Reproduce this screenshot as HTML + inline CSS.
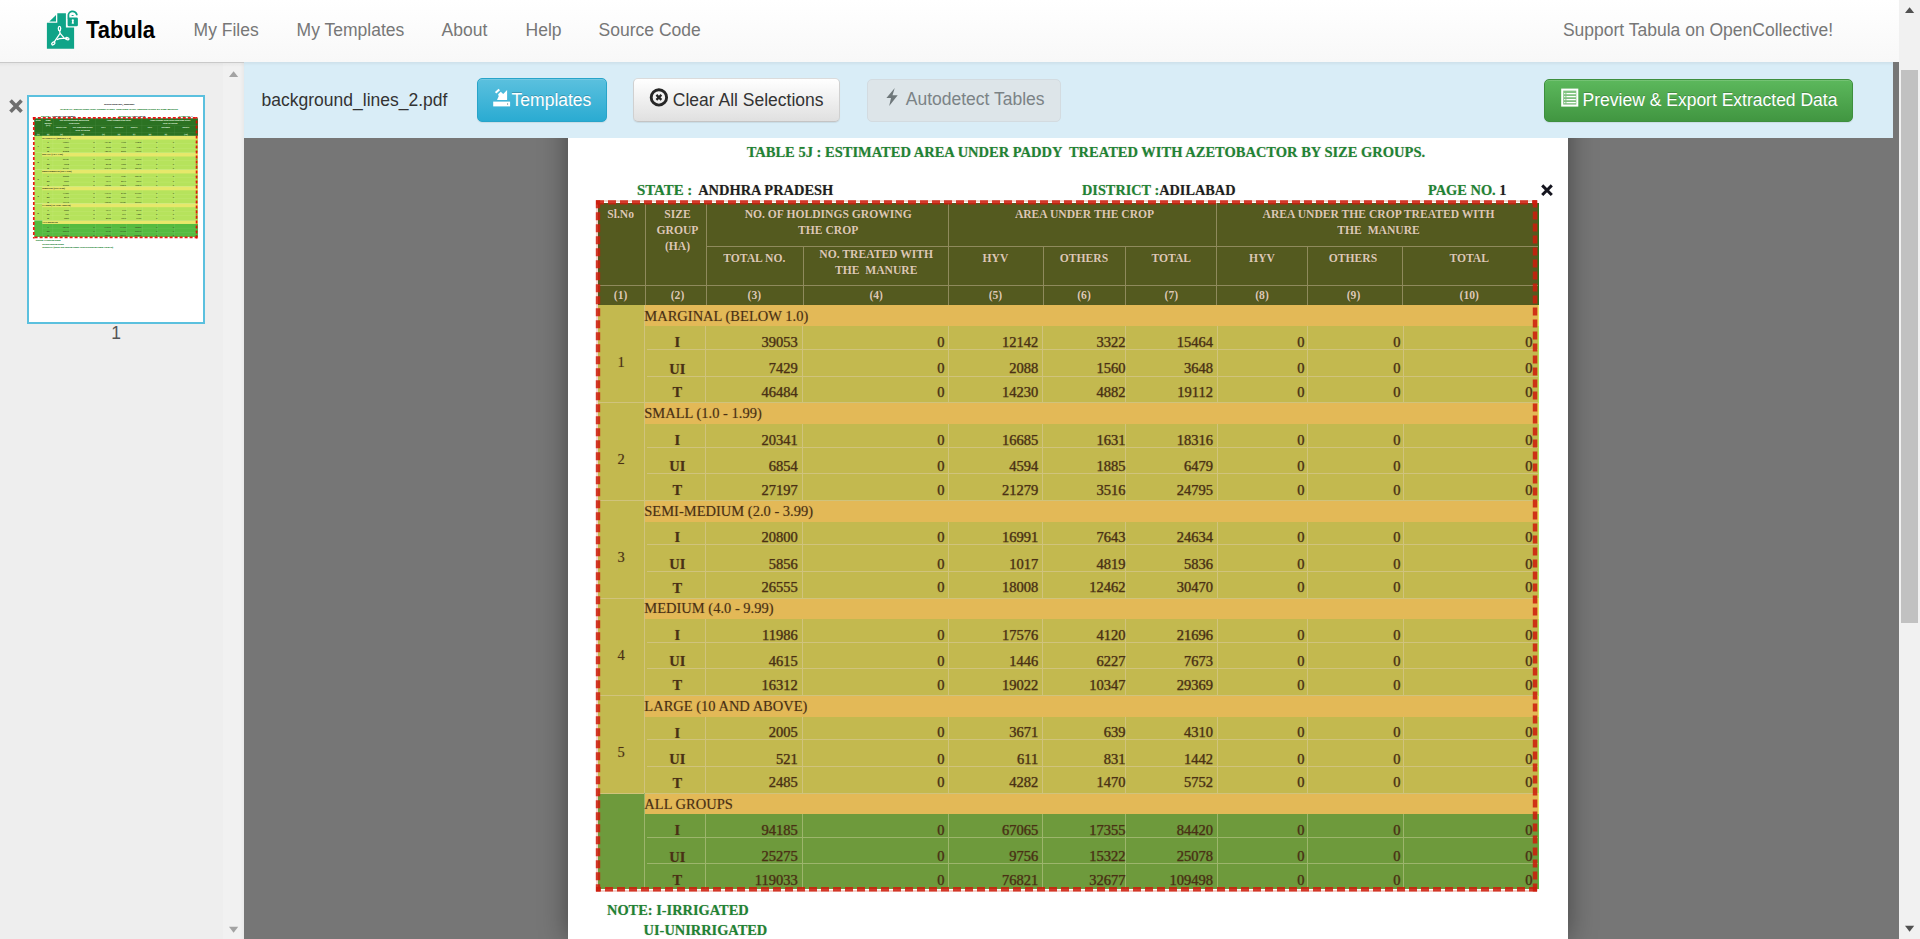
<!DOCTYPE html><html><head><meta charset="utf-8"><style>
*{box-sizing:border-box;margin:0;padding:0}
html,body{width:1920px;height:939px;overflow:hidden;background:#767676;font-family:"Liberation Sans",sans-serif}
.t{position:absolute;line-height:1;white-space:pre}
.r{position:absolute}
.abs{position:absolute}
#pgw .t{text-shadow:0 0 1px rgba(60,40,20,.35)}
#pgw .n{-webkit-text-stroke:.25px currentColor}
.th .t{-webkit-text-stroke:.6px currentColor}
</style></head><body>
<div class="r" style="left:244.00px;top:62.00px;width:1655.00px;height:877.00px;background:#767676;"></div>
<div class="r" style="left:568.00px;top:80.00px;width:1000.00px;height:859.00px;background:#fff;box-shadow:0 0 26px rgba(0,0,0,.42)"></div>
<div id="pgw" class="abs" style="left:0;top:0;width:1920px;height:939px">
<div class="t" style="left:746.70px;top:144.86px;font-size:14.5px;color:#1e8434;font-weight:700;font-family:'Liberation Serif',serif;">TABLE 5J : ESTIMATED AREA UNDER PADDY  TREATED WITH AZETOBACTOR BY SIZE GROUPS.</div>
<div class="t" style="left:637.00px;top:182.52px;font-size:14.9px;color:#1e8434;font-weight:700;font-family:'Liberation Serif',serif;">STATE :</div>
<div class="t" style="left:698.20px;top:182.90px;font-size:14.45px;color:#1e1e1e;font-weight:700;font-family:'Liberation Serif',serif;">ANDHRA PRADESH</div>
<div class="t" style="left:1082.00px;top:183.02px;font-size:14.3px;color:#1e8434;font-weight:700;font-family:'Liberation Serif',serif;">DISTRICT :<span style="color:#1e1e1e">ADILABAD</span></div>
<div class="t" style="left:1428.00px;top:182.94px;font-size:14.4px;color:#1e8434;font-weight:700;font-family:'Liberation Serif',serif;">PAGE NO. <span style="color:#1e1e1e">1</span></div>
<div class="r" style="left:598.00px;top:202.50px;width:939.50px;height:102.50px;background:#545a1f;"></div>
<div class="r" style="left:707px;top:245.80px;width:830.50px;height:1px;background:#8f8a5c"></div>
<div class="r" style="left:598px;top:284.60px;width:939.50px;height:1px;background:#8f8a5c"></div>
<div class="r" style="left:645.00px;top:202.50px;width:1px;height:102.50px;background:#8f8a5c"></div>
<div class="r" style="left:706.30px;top:202.50px;width:1px;height:102.50px;background:#8f8a5c"></div>
<div class="r" style="left:802.50px;top:246.30px;width:1px;height:58.70px;background:#8f8a5c"></div>
<div class="r" style="left:947.80px;top:202.50px;width:1px;height:102.50px;background:#8f8a5c"></div>
<div class="r" style="left:1042.50px;top:246.30px;width:1px;height:58.70px;background:#8f8a5c"></div>
<div class="r" style="left:1124.50px;top:246.30px;width:1px;height:58.70px;background:#8f8a5c"></div>
<div class="r" style="left:1216.20px;top:202.50px;width:1px;height:102.50px;background:#8f8a5c"></div>
<div class="r" style="left:1306.50px;top:246.30px;width:1px;height:58.70px;background:#8f8a5c"></div>
<div class="r" style="left:1401.50px;top:246.30px;width:1px;height:58.70px;background:#8f8a5c"></div>
<div class="t" style="left:320.60px;width:600px;text-align:center;top:208.98px;font-size:11.6px;color:#dcc8b4;font-weight:700;font-family:'Liberation Serif',serif;">Sl.No</div>
<div class="t" style="left:377.50px;width:600px;text-align:center;top:208.98px;font-size:11.6px;color:#dcc8b4;font-weight:700;font-family:'Liberation Serif',serif;">SIZE</div>
<div class="t" style="left:377.50px;width:600px;text-align:center;top:225.19px;font-size:11.6px;color:#dcc8b4;font-weight:700;font-family:'Liberation Serif',serif;">GROUP</div>
<div class="t" style="left:377.50px;width:600px;text-align:center;top:241.28px;font-size:11.6px;color:#dcc8b4;font-weight:700;font-family:'Liberation Serif',serif;">(HA)</div>
<div class="t" style="left:528.20px;width:600px;text-align:center;top:208.98px;font-size:11.6px;color:#dcc8b4;font-weight:700;font-family:'Liberation Serif',serif;">NO. OF HOLDINGS GROWING</div>
<div class="t" style="left:528.20px;width:600px;text-align:center;top:225.19px;font-size:11.6px;color:#dcc8b4;font-weight:700;font-family:'Liberation Serif',serif;">THE CROP</div>
<div class="t" style="left:784.50px;width:600px;text-align:center;top:208.98px;font-size:11.6px;color:#dcc8b4;font-weight:700;font-family:'Liberation Serif',serif;">AREA UNDER THE CROP</div>
<div class="t" style="left:1078.60px;width:600px;text-align:center;top:208.98px;font-size:11.6px;color:#dcc8b4;font-weight:700;font-family:'Liberation Serif',serif;">AREA UNDER THE CROP TREATED WITH</div>
<div class="t" style="left:1078.60px;width:600px;text-align:center;top:225.19px;font-size:11.6px;color:#dcc8b4;font-weight:700;font-family:'Liberation Serif',serif;">THE  MANURE</div>
<div class="t" style="left:454.30px;width:600px;text-align:center;top:252.68px;font-size:11.6px;color:#dcc8b4;font-weight:700;font-family:'Liberation Serif',serif;">TOTAL NO.</div>
<div class="t" style="left:576.20px;width:600px;text-align:center;top:248.89px;font-size:11.6px;color:#dcc8b4;font-weight:700;font-family:'Liberation Serif',serif;">NO. TREATED WITH</div>
<div class="t" style="left:576.20px;width:600px;text-align:center;top:264.99px;font-size:11.6px;color:#dcc8b4;font-weight:700;font-family:'Liberation Serif',serif;">THE  MANURE</div>
<div class="t" style="left:695.40px;width:600px;text-align:center;top:252.68px;font-size:11.6px;color:#dcc8b4;font-weight:700;font-family:'Liberation Serif',serif;">HYV</div>
<div class="t" style="left:784.00px;width:600px;text-align:center;top:252.68px;font-size:11.6px;color:#dcc8b4;font-weight:700;font-family:'Liberation Serif',serif;">OTHERS</div>
<div class="t" style="left:871.30px;width:600px;text-align:center;top:252.68px;font-size:11.6px;color:#dcc8b4;font-weight:700;font-family:'Liberation Serif',serif;">TOTAL</div>
<div class="t" style="left:962.00px;width:600px;text-align:center;top:252.68px;font-size:11.6px;color:#dcc8b4;font-weight:700;font-family:'Liberation Serif',serif;">HYV</div>
<div class="t" style="left:1053.00px;width:600px;text-align:center;top:252.68px;font-size:11.6px;color:#dcc8b4;font-weight:700;font-family:'Liberation Serif',serif;">OTHERS</div>
<div class="t" style="left:1169.20px;width:600px;text-align:center;top:252.68px;font-size:11.6px;color:#dcc8b4;font-weight:700;font-family:'Liberation Serif',serif;">TOTAL</div>
<div class="t" style="left:320.60px;width:600px;text-align:center;top:290.29px;font-size:11.6px;color:#dcc8b4;font-weight:700;font-family:'Liberation Serif',serif;">(1)</div>
<div class="t" style="left:377.50px;width:600px;text-align:center;top:290.29px;font-size:11.6px;color:#dcc8b4;font-weight:700;font-family:'Liberation Serif',serif;">(2)</div>
<div class="t" style="left:454.30px;width:600px;text-align:center;top:290.29px;font-size:11.6px;color:#dcc8b4;font-weight:700;font-family:'Liberation Serif',serif;">(3)</div>
<div class="t" style="left:576.20px;width:600px;text-align:center;top:290.29px;font-size:11.6px;color:#dcc8b4;font-weight:700;font-family:'Liberation Serif',serif;">(4)</div>
<div class="t" style="left:695.40px;width:600px;text-align:center;top:290.29px;font-size:11.6px;color:#dcc8b4;font-weight:700;font-family:'Liberation Serif',serif;">(5)</div>
<div class="t" style="left:784.00px;width:600px;text-align:center;top:290.29px;font-size:11.6px;color:#dcc8b4;font-weight:700;font-family:'Liberation Serif',serif;">(6)</div>
<div class="t" style="left:871.30px;width:600px;text-align:center;top:290.29px;font-size:11.6px;color:#dcc8b4;font-weight:700;font-family:'Liberation Serif',serif;">(7)</div>
<div class="t" style="left:962.00px;width:600px;text-align:center;top:290.29px;font-size:11.6px;color:#dcc8b4;font-weight:700;font-family:'Liberation Serif',serif;">(8)</div>
<div class="t" style="left:1053.50px;width:600px;text-align:center;top:290.29px;font-size:11.6px;color:#dcc8b4;font-weight:700;font-family:'Liberation Serif',serif;">(9)</div>
<div class="t" style="left:1169.20px;width:600px;text-align:center;top:290.29px;font-size:11.6px;color:#dcc8b4;font-weight:700;font-family:'Liberation Serif',serif;">(10)</div>
<div class="r" style="left:598.00px;top:305.40px;width:939.50px;height:97.56px;background:#c3b94f;"></div>
<div class="r" style="left:644.00px;top:305.40px;width:893.50px;height:21.00px;background:#e3b957;"></div>
<div class="r" style="left:598.00px;top:402.96px;width:939.50px;height:97.56px;background:#c3b94f;"></div>
<div class="r" style="left:644.00px;top:402.96px;width:893.50px;height:21.00px;background:#e3b957;"></div>
<div class="r" style="left:598.00px;top:500.52px;width:939.50px;height:97.56px;background:#c3b94f;"></div>
<div class="r" style="left:644.00px;top:500.52px;width:893.50px;height:21.00px;background:#e3b957;"></div>
<div class="r" style="left:598.00px;top:598.08px;width:939.50px;height:97.56px;background:#c3b94f;"></div>
<div class="r" style="left:644.00px;top:598.08px;width:893.50px;height:21.00px;background:#e3b957;"></div>
<div class="r" style="left:598.00px;top:695.64px;width:939.50px;height:97.56px;background:#c3b94f;"></div>
<div class="r" style="left:644.00px;top:695.64px;width:893.50px;height:21.00px;background:#e3b957;"></div>
<div class="r" style="left:598.00px;top:793.20px;width:939.50px;height:96.30px;background:#6e9a3c;"></div>
<div class="r" style="left:644.00px;top:793.20px;width:893.50px;height:21.00px;background:#e3b957;"></div>
<div class="r" style="left:1537.50px;top:202.50px;width:1.00px;height:102.50px;background:#2b7222;"></div>
<div class="r" style="left:1537.50px;top:305.40px;width:1.00px;height:97.56px;background:#b6e35c;"></div>
<div class="r" style="left:1537.50px;top:305.40px;width:1.00px;height:21.00px;background:#e6e86a;"></div>
<div class="r" style="left:1537.50px;top:402.96px;width:1.00px;height:97.56px;background:#b6e35c;"></div>
<div class="r" style="left:1537.50px;top:402.96px;width:1.00px;height:21.00px;background:#e6e86a;"></div>
<div class="r" style="left:1537.50px;top:500.52px;width:1.00px;height:97.56px;background:#b6e35c;"></div>
<div class="r" style="left:1537.50px;top:500.52px;width:1.00px;height:21.00px;background:#e6e86a;"></div>
<div class="r" style="left:1537.50px;top:598.08px;width:1.00px;height:97.56px;background:#b6e35c;"></div>
<div class="r" style="left:1537.50px;top:598.08px;width:1.00px;height:21.00px;background:#e6e86a;"></div>
<div class="r" style="left:1537.50px;top:695.64px;width:1.00px;height:97.56px;background:#b6e35c;"></div>
<div class="r" style="left:1537.50px;top:695.64px;width:1.00px;height:21.00px;background:#e6e86a;"></div>
<div class="r" style="left:1537.50px;top:793.20px;width:1.00px;height:96.30px;background:#55bb40;"></div>
<div class="r" style="left:1537.50px;top:793.20px;width:1.00px;height:21.00px;background:#e6e86a;"></div>
<div class="r" style="left:647px;top:349.10px;width:890.50px;height:1px;background:#d0c37c"></div>
<div class="r" style="left:647px;top:375.50px;width:890.50px;height:1px;background:#d0c37c"></div>
<div class="r" style="left:643.50px;top:305.40px;width:1px;height:97.56px;background:#d0c37c"></div>
<div class="r" style="left:704.50px;top:326.40px;width:1px;height:76.56px;background:#d0c37c"></div>
<div class="r" style="left:801.90px;top:326.40px;width:1px;height:76.56px;background:#d0c37c"></div>
<div class="r" style="left:948.00px;top:326.40px;width:1px;height:76.56px;background:#d0c37c"></div>
<div class="r" style="left:1042.20px;top:326.40px;width:1px;height:76.56px;background:#d0c37c"></div>
<div class="r" style="left:1124.50px;top:326.40px;width:1px;height:76.56px;background:#d0c37c"></div>
<div class="r" style="left:1217.00px;top:326.40px;width:1px;height:76.56px;background:#d0c37c"></div>
<div class="r" style="left:1307.30px;top:326.40px;width:1px;height:76.56px;background:#d0c37c"></div>
<div class="r" style="left:1403.10px;top:326.40px;width:1px;height:76.56px;background:#d0c37c"></div>
<div class="r" style="left:647px;top:446.66px;width:890.50px;height:1px;background:#d0c37c"></div>
<div class="r" style="left:647px;top:473.06px;width:890.50px;height:1px;background:#d0c37c"></div>
<div class="r" style="left:598px;top:402.46px;width:939.50px;height:1px;background:#d0c37c"></div>
<div class="r" style="left:643.50px;top:402.96px;width:1px;height:97.56px;background:#d0c37c"></div>
<div class="r" style="left:704.50px;top:423.96px;width:1px;height:76.56px;background:#d0c37c"></div>
<div class="r" style="left:801.90px;top:423.96px;width:1px;height:76.56px;background:#d0c37c"></div>
<div class="r" style="left:948.00px;top:423.96px;width:1px;height:76.56px;background:#d0c37c"></div>
<div class="r" style="left:1042.20px;top:423.96px;width:1px;height:76.56px;background:#d0c37c"></div>
<div class="r" style="left:1124.50px;top:423.96px;width:1px;height:76.56px;background:#d0c37c"></div>
<div class="r" style="left:1217.00px;top:423.96px;width:1px;height:76.56px;background:#d0c37c"></div>
<div class="r" style="left:1307.30px;top:423.96px;width:1px;height:76.56px;background:#d0c37c"></div>
<div class="r" style="left:1403.10px;top:423.96px;width:1px;height:76.56px;background:#d0c37c"></div>
<div class="r" style="left:647px;top:544.22px;width:890.50px;height:1px;background:#d0c37c"></div>
<div class="r" style="left:647px;top:570.62px;width:890.50px;height:1px;background:#d0c37c"></div>
<div class="r" style="left:598px;top:500.02px;width:939.50px;height:1px;background:#d0c37c"></div>
<div class="r" style="left:643.50px;top:500.52px;width:1px;height:97.56px;background:#d0c37c"></div>
<div class="r" style="left:704.50px;top:521.52px;width:1px;height:76.56px;background:#d0c37c"></div>
<div class="r" style="left:801.90px;top:521.52px;width:1px;height:76.56px;background:#d0c37c"></div>
<div class="r" style="left:948.00px;top:521.52px;width:1px;height:76.56px;background:#d0c37c"></div>
<div class="r" style="left:1042.20px;top:521.52px;width:1px;height:76.56px;background:#d0c37c"></div>
<div class="r" style="left:1124.50px;top:521.52px;width:1px;height:76.56px;background:#d0c37c"></div>
<div class="r" style="left:1217.00px;top:521.52px;width:1px;height:76.56px;background:#d0c37c"></div>
<div class="r" style="left:1307.30px;top:521.52px;width:1px;height:76.56px;background:#d0c37c"></div>
<div class="r" style="left:1403.10px;top:521.52px;width:1px;height:76.56px;background:#d0c37c"></div>
<div class="r" style="left:647px;top:641.78px;width:890.50px;height:1px;background:#d0c37c"></div>
<div class="r" style="left:647px;top:668.18px;width:890.50px;height:1px;background:#d0c37c"></div>
<div class="r" style="left:598px;top:597.58px;width:939.50px;height:1px;background:#d0c37c"></div>
<div class="r" style="left:643.50px;top:598.08px;width:1px;height:97.56px;background:#d0c37c"></div>
<div class="r" style="left:704.50px;top:619.08px;width:1px;height:76.56px;background:#d0c37c"></div>
<div class="r" style="left:801.90px;top:619.08px;width:1px;height:76.56px;background:#d0c37c"></div>
<div class="r" style="left:948.00px;top:619.08px;width:1px;height:76.56px;background:#d0c37c"></div>
<div class="r" style="left:1042.20px;top:619.08px;width:1px;height:76.56px;background:#d0c37c"></div>
<div class="r" style="left:1124.50px;top:619.08px;width:1px;height:76.56px;background:#d0c37c"></div>
<div class="r" style="left:1217.00px;top:619.08px;width:1px;height:76.56px;background:#d0c37c"></div>
<div class="r" style="left:1307.30px;top:619.08px;width:1px;height:76.56px;background:#d0c37c"></div>
<div class="r" style="left:1403.10px;top:619.08px;width:1px;height:76.56px;background:#d0c37c"></div>
<div class="r" style="left:647px;top:739.34px;width:890.50px;height:1px;background:#d0c37c"></div>
<div class="r" style="left:647px;top:765.74px;width:890.50px;height:1px;background:#d0c37c"></div>
<div class="r" style="left:598px;top:695.14px;width:939.50px;height:1px;background:#d0c37c"></div>
<div class="r" style="left:643.50px;top:695.64px;width:1px;height:97.56px;background:#d0c37c"></div>
<div class="r" style="left:704.50px;top:716.64px;width:1px;height:76.56px;background:#d0c37c"></div>
<div class="r" style="left:801.90px;top:716.64px;width:1px;height:76.56px;background:#d0c37c"></div>
<div class="r" style="left:948.00px;top:716.64px;width:1px;height:76.56px;background:#d0c37c"></div>
<div class="r" style="left:1042.20px;top:716.64px;width:1px;height:76.56px;background:#d0c37c"></div>
<div class="r" style="left:1124.50px;top:716.64px;width:1px;height:76.56px;background:#d0c37c"></div>
<div class="r" style="left:1217.00px;top:716.64px;width:1px;height:76.56px;background:#d0c37c"></div>
<div class="r" style="left:1307.30px;top:716.64px;width:1px;height:76.56px;background:#d0c37c"></div>
<div class="r" style="left:1403.10px;top:716.64px;width:1px;height:76.56px;background:#d0c37c"></div>
<div class="r" style="left:647px;top:836.90px;width:890.50px;height:1px;background:#9cb56c"></div>
<div class="r" style="left:647px;top:863.30px;width:890.50px;height:1px;background:#9cb56c"></div>
<div class="r" style="left:598px;top:792.70px;width:939.50px;height:1px;background:#d0c37c"></div>
<div class="r" style="left:643.50px;top:793.20px;width:1px;height:96.30px;background:#9cb56c"></div>
<div class="r" style="left:704.50px;top:814.20px;width:1px;height:75.30px;background:#9cb56c"></div>
<div class="r" style="left:801.90px;top:814.20px;width:1px;height:75.30px;background:#9cb56c"></div>
<div class="r" style="left:948.00px;top:814.20px;width:1px;height:75.30px;background:#9cb56c"></div>
<div class="r" style="left:1042.20px;top:814.20px;width:1px;height:75.30px;background:#9cb56c"></div>
<div class="r" style="left:1124.50px;top:814.20px;width:1px;height:75.30px;background:#9cb56c"></div>
<div class="r" style="left:1217.00px;top:814.20px;width:1px;height:75.30px;background:#9cb56c"></div>
<div class="r" style="left:1307.30px;top:814.20px;width:1px;height:75.30px;background:#9cb56c"></div>
<div class="r" style="left:1403.10px;top:814.20px;width:1px;height:75.30px;background:#9cb56c"></div>
<div class="t" style="left:644.30px;top:308.76px;font-size:14.5px;color:#4a3015;font-weight:400;font-family:'Liberation Serif',serif;">MARGINAL (BELOW 1.0)</div>
<div class="t" style="left:321.00px;width:600px;text-align:center;top:354.86px;font-size:14.5px;color:#4a3015;font-weight:400;font-family:'Liberation Serif',serif;">1</div>
<div class="t" style="left:377.30px;width:600px;text-align:center;top:335.26px;font-size:14.5px;color:#4a3015;font-weight:700;font-family:'Liberation Serif',serif;">I</div>
<div class="t" style="left:197.70px;width:600px;text-align:right;top:334.96px;font-size:14.5px;color:#4a3015;font-weight:400;font-family:'Liberation Serif',serif;-webkit-text-stroke:.25px">39053</div>
<div class="t" style="left:344.60px;width:600px;text-align:right;top:334.96px;font-size:14.5px;color:#4a3015;font-weight:400;font-family:'Liberation Serif',serif;-webkit-text-stroke:.25px">0</div>
<div class="t" style="left:438.20px;width:600px;text-align:right;top:334.96px;font-size:14.5px;color:#4a3015;font-weight:400;font-family:'Liberation Serif',serif;-webkit-text-stroke:.25px">12142</div>
<div class="t" style="left:525.50px;width:600px;text-align:right;top:334.96px;font-size:14.5px;color:#4a3015;font-weight:400;font-family:'Liberation Serif',serif;-webkit-text-stroke:.25px">3322</div>
<div class="t" style="left:613.00px;width:600px;text-align:right;top:334.96px;font-size:14.5px;color:#4a3015;font-weight:400;font-family:'Liberation Serif',serif;-webkit-text-stroke:.25px">15464</div>
<div class="t" style="left:704.60px;width:600px;text-align:right;top:334.96px;font-size:14.5px;color:#4a3015;font-weight:400;font-family:'Liberation Serif',serif;-webkit-text-stroke:.25px">0</div>
<div class="t" style="left:800.40px;width:600px;text-align:right;top:334.96px;font-size:14.5px;color:#4a3015;font-weight:400;font-family:'Liberation Serif',serif;-webkit-text-stroke:.25px">0</div>
<div class="t" style="left:932.50px;width:600px;text-align:right;top:334.96px;font-size:14.5px;color:#4a3015;font-weight:400;font-family:'Liberation Serif',serif;-webkit-text-stroke:.25px">0</div>
<div class="t" style="left:377.30px;width:600px;text-align:center;top:361.76px;font-size:14.5px;color:#4a3015;font-weight:700;font-family:'Liberation Serif',serif;">UI</div>
<div class="t" style="left:197.70px;width:600px;text-align:right;top:361.46px;font-size:14.5px;color:#4a3015;font-weight:400;font-family:'Liberation Serif',serif;-webkit-text-stroke:.25px">7429</div>
<div class="t" style="left:344.60px;width:600px;text-align:right;top:361.46px;font-size:14.5px;color:#4a3015;font-weight:400;font-family:'Liberation Serif',serif;-webkit-text-stroke:.25px">0</div>
<div class="t" style="left:438.20px;width:600px;text-align:right;top:361.46px;font-size:14.5px;color:#4a3015;font-weight:400;font-family:'Liberation Serif',serif;-webkit-text-stroke:.25px">2088</div>
<div class="t" style="left:525.50px;width:600px;text-align:right;top:361.46px;font-size:14.5px;color:#4a3015;font-weight:400;font-family:'Liberation Serif',serif;-webkit-text-stroke:.25px">1560</div>
<div class="t" style="left:613.00px;width:600px;text-align:right;top:361.46px;font-size:14.5px;color:#4a3015;font-weight:400;font-family:'Liberation Serif',serif;-webkit-text-stroke:.25px">3648</div>
<div class="t" style="left:704.60px;width:600px;text-align:right;top:361.46px;font-size:14.5px;color:#4a3015;font-weight:400;font-family:'Liberation Serif',serif;-webkit-text-stroke:.25px">0</div>
<div class="t" style="left:800.40px;width:600px;text-align:right;top:361.46px;font-size:14.5px;color:#4a3015;font-weight:400;font-family:'Liberation Serif',serif;-webkit-text-stroke:.25px">0</div>
<div class="t" style="left:932.50px;width:600px;text-align:right;top:361.46px;font-size:14.5px;color:#4a3015;font-weight:400;font-family:'Liberation Serif',serif;-webkit-text-stroke:.25px">0</div>
<div class="t" style="left:377.30px;width:600px;text-align:center;top:385.46px;font-size:14.5px;color:#4a3015;font-weight:700;font-family:'Liberation Serif',serif;">T</div>
<div class="t" style="left:197.70px;width:600px;text-align:right;top:385.16px;font-size:14.5px;color:#4a3015;font-weight:400;font-family:'Liberation Serif',serif;-webkit-text-stroke:.25px">46484</div>
<div class="t" style="left:344.60px;width:600px;text-align:right;top:385.16px;font-size:14.5px;color:#4a3015;font-weight:400;font-family:'Liberation Serif',serif;-webkit-text-stroke:.25px">0</div>
<div class="t" style="left:438.20px;width:600px;text-align:right;top:385.16px;font-size:14.5px;color:#4a3015;font-weight:400;font-family:'Liberation Serif',serif;-webkit-text-stroke:.25px">14230</div>
<div class="t" style="left:525.50px;width:600px;text-align:right;top:385.16px;font-size:14.5px;color:#4a3015;font-weight:400;font-family:'Liberation Serif',serif;-webkit-text-stroke:.25px">4882</div>
<div class="t" style="left:613.00px;width:600px;text-align:right;top:385.16px;font-size:14.5px;color:#4a3015;font-weight:400;font-family:'Liberation Serif',serif;-webkit-text-stroke:.25px">19112</div>
<div class="t" style="left:704.60px;width:600px;text-align:right;top:385.16px;font-size:14.5px;color:#4a3015;font-weight:400;font-family:'Liberation Serif',serif;-webkit-text-stroke:.25px">0</div>
<div class="t" style="left:800.40px;width:600px;text-align:right;top:385.16px;font-size:14.5px;color:#4a3015;font-weight:400;font-family:'Liberation Serif',serif;-webkit-text-stroke:.25px">0</div>
<div class="t" style="left:932.50px;width:600px;text-align:right;top:385.16px;font-size:14.5px;color:#4a3015;font-weight:400;font-family:'Liberation Serif',serif;-webkit-text-stroke:.25px">0</div>
<div class="t" style="left:644.30px;top:406.32px;font-size:14.5px;color:#4a3015;font-weight:400;font-family:'Liberation Serif',serif;">SMALL (1.0 - 1.99)</div>
<div class="t" style="left:321.00px;width:600px;text-align:center;top:452.42px;font-size:14.5px;color:#4a3015;font-weight:400;font-family:'Liberation Serif',serif;">2</div>
<div class="t" style="left:377.30px;width:600px;text-align:center;top:432.82px;font-size:14.5px;color:#4a3015;font-weight:700;font-family:'Liberation Serif',serif;">I</div>
<div class="t" style="left:197.70px;width:600px;text-align:right;top:432.52px;font-size:14.5px;color:#4a3015;font-weight:400;font-family:'Liberation Serif',serif;-webkit-text-stroke:.25px">20341</div>
<div class="t" style="left:344.60px;width:600px;text-align:right;top:432.52px;font-size:14.5px;color:#4a3015;font-weight:400;font-family:'Liberation Serif',serif;-webkit-text-stroke:.25px">0</div>
<div class="t" style="left:438.20px;width:600px;text-align:right;top:432.52px;font-size:14.5px;color:#4a3015;font-weight:400;font-family:'Liberation Serif',serif;-webkit-text-stroke:.25px">16685</div>
<div class="t" style="left:525.50px;width:600px;text-align:right;top:432.52px;font-size:14.5px;color:#4a3015;font-weight:400;font-family:'Liberation Serif',serif;-webkit-text-stroke:.25px">1631</div>
<div class="t" style="left:613.00px;width:600px;text-align:right;top:432.52px;font-size:14.5px;color:#4a3015;font-weight:400;font-family:'Liberation Serif',serif;-webkit-text-stroke:.25px">18316</div>
<div class="t" style="left:704.60px;width:600px;text-align:right;top:432.52px;font-size:14.5px;color:#4a3015;font-weight:400;font-family:'Liberation Serif',serif;-webkit-text-stroke:.25px">0</div>
<div class="t" style="left:800.40px;width:600px;text-align:right;top:432.52px;font-size:14.5px;color:#4a3015;font-weight:400;font-family:'Liberation Serif',serif;-webkit-text-stroke:.25px">0</div>
<div class="t" style="left:932.50px;width:600px;text-align:right;top:432.52px;font-size:14.5px;color:#4a3015;font-weight:400;font-family:'Liberation Serif',serif;-webkit-text-stroke:.25px">0</div>
<div class="t" style="left:377.30px;width:600px;text-align:center;top:459.32px;font-size:14.5px;color:#4a3015;font-weight:700;font-family:'Liberation Serif',serif;">UI</div>
<div class="t" style="left:197.70px;width:600px;text-align:right;top:459.02px;font-size:14.5px;color:#4a3015;font-weight:400;font-family:'Liberation Serif',serif;-webkit-text-stroke:.25px">6854</div>
<div class="t" style="left:344.60px;width:600px;text-align:right;top:459.02px;font-size:14.5px;color:#4a3015;font-weight:400;font-family:'Liberation Serif',serif;-webkit-text-stroke:.25px">0</div>
<div class="t" style="left:438.20px;width:600px;text-align:right;top:459.02px;font-size:14.5px;color:#4a3015;font-weight:400;font-family:'Liberation Serif',serif;-webkit-text-stroke:.25px">4594</div>
<div class="t" style="left:525.50px;width:600px;text-align:right;top:459.02px;font-size:14.5px;color:#4a3015;font-weight:400;font-family:'Liberation Serif',serif;-webkit-text-stroke:.25px">1885</div>
<div class="t" style="left:613.00px;width:600px;text-align:right;top:459.02px;font-size:14.5px;color:#4a3015;font-weight:400;font-family:'Liberation Serif',serif;-webkit-text-stroke:.25px">6479</div>
<div class="t" style="left:704.60px;width:600px;text-align:right;top:459.02px;font-size:14.5px;color:#4a3015;font-weight:400;font-family:'Liberation Serif',serif;-webkit-text-stroke:.25px">0</div>
<div class="t" style="left:800.40px;width:600px;text-align:right;top:459.02px;font-size:14.5px;color:#4a3015;font-weight:400;font-family:'Liberation Serif',serif;-webkit-text-stroke:.25px">0</div>
<div class="t" style="left:932.50px;width:600px;text-align:right;top:459.02px;font-size:14.5px;color:#4a3015;font-weight:400;font-family:'Liberation Serif',serif;-webkit-text-stroke:.25px">0</div>
<div class="t" style="left:377.30px;width:600px;text-align:center;top:483.02px;font-size:14.5px;color:#4a3015;font-weight:700;font-family:'Liberation Serif',serif;">T</div>
<div class="t" style="left:197.70px;width:600px;text-align:right;top:482.72px;font-size:14.5px;color:#4a3015;font-weight:400;font-family:'Liberation Serif',serif;-webkit-text-stroke:.25px">27197</div>
<div class="t" style="left:344.60px;width:600px;text-align:right;top:482.72px;font-size:14.5px;color:#4a3015;font-weight:400;font-family:'Liberation Serif',serif;-webkit-text-stroke:.25px">0</div>
<div class="t" style="left:438.20px;width:600px;text-align:right;top:482.72px;font-size:14.5px;color:#4a3015;font-weight:400;font-family:'Liberation Serif',serif;-webkit-text-stroke:.25px">21279</div>
<div class="t" style="left:525.50px;width:600px;text-align:right;top:482.72px;font-size:14.5px;color:#4a3015;font-weight:400;font-family:'Liberation Serif',serif;-webkit-text-stroke:.25px">3516</div>
<div class="t" style="left:613.00px;width:600px;text-align:right;top:482.72px;font-size:14.5px;color:#4a3015;font-weight:400;font-family:'Liberation Serif',serif;-webkit-text-stroke:.25px">24795</div>
<div class="t" style="left:704.60px;width:600px;text-align:right;top:482.72px;font-size:14.5px;color:#4a3015;font-weight:400;font-family:'Liberation Serif',serif;-webkit-text-stroke:.25px">0</div>
<div class="t" style="left:800.40px;width:600px;text-align:right;top:482.72px;font-size:14.5px;color:#4a3015;font-weight:400;font-family:'Liberation Serif',serif;-webkit-text-stroke:.25px">0</div>
<div class="t" style="left:932.50px;width:600px;text-align:right;top:482.72px;font-size:14.5px;color:#4a3015;font-weight:400;font-family:'Liberation Serif',serif;-webkit-text-stroke:.25px">0</div>
<div class="t" style="left:644.30px;top:503.88px;font-size:14.5px;color:#4a3015;font-weight:400;font-family:'Liberation Serif',serif;">SEMI-MEDIUM (2.0 - 3.99)</div>
<div class="t" style="left:321.00px;width:600px;text-align:center;top:549.98px;font-size:14.5px;color:#4a3015;font-weight:400;font-family:'Liberation Serif',serif;">3</div>
<div class="t" style="left:377.30px;width:600px;text-align:center;top:530.38px;font-size:14.5px;color:#4a3015;font-weight:700;font-family:'Liberation Serif',serif;">I</div>
<div class="t" style="left:197.70px;width:600px;text-align:right;top:530.08px;font-size:14.5px;color:#4a3015;font-weight:400;font-family:'Liberation Serif',serif;-webkit-text-stroke:.25px">20800</div>
<div class="t" style="left:344.60px;width:600px;text-align:right;top:530.08px;font-size:14.5px;color:#4a3015;font-weight:400;font-family:'Liberation Serif',serif;-webkit-text-stroke:.25px">0</div>
<div class="t" style="left:438.20px;width:600px;text-align:right;top:530.08px;font-size:14.5px;color:#4a3015;font-weight:400;font-family:'Liberation Serif',serif;-webkit-text-stroke:.25px">16991</div>
<div class="t" style="left:525.50px;width:600px;text-align:right;top:530.08px;font-size:14.5px;color:#4a3015;font-weight:400;font-family:'Liberation Serif',serif;-webkit-text-stroke:.25px">7643</div>
<div class="t" style="left:613.00px;width:600px;text-align:right;top:530.08px;font-size:14.5px;color:#4a3015;font-weight:400;font-family:'Liberation Serif',serif;-webkit-text-stroke:.25px">24634</div>
<div class="t" style="left:704.60px;width:600px;text-align:right;top:530.08px;font-size:14.5px;color:#4a3015;font-weight:400;font-family:'Liberation Serif',serif;-webkit-text-stroke:.25px">0</div>
<div class="t" style="left:800.40px;width:600px;text-align:right;top:530.08px;font-size:14.5px;color:#4a3015;font-weight:400;font-family:'Liberation Serif',serif;-webkit-text-stroke:.25px">0</div>
<div class="t" style="left:932.50px;width:600px;text-align:right;top:530.08px;font-size:14.5px;color:#4a3015;font-weight:400;font-family:'Liberation Serif',serif;-webkit-text-stroke:.25px">0</div>
<div class="t" style="left:377.30px;width:600px;text-align:center;top:556.88px;font-size:14.5px;color:#4a3015;font-weight:700;font-family:'Liberation Serif',serif;">UI</div>
<div class="t" style="left:197.70px;width:600px;text-align:right;top:556.58px;font-size:14.5px;color:#4a3015;font-weight:400;font-family:'Liberation Serif',serif;-webkit-text-stroke:.25px">5856</div>
<div class="t" style="left:344.60px;width:600px;text-align:right;top:556.58px;font-size:14.5px;color:#4a3015;font-weight:400;font-family:'Liberation Serif',serif;-webkit-text-stroke:.25px">0</div>
<div class="t" style="left:438.20px;width:600px;text-align:right;top:556.58px;font-size:14.5px;color:#4a3015;font-weight:400;font-family:'Liberation Serif',serif;-webkit-text-stroke:.25px">1017</div>
<div class="t" style="left:525.50px;width:600px;text-align:right;top:556.58px;font-size:14.5px;color:#4a3015;font-weight:400;font-family:'Liberation Serif',serif;-webkit-text-stroke:.25px">4819</div>
<div class="t" style="left:613.00px;width:600px;text-align:right;top:556.58px;font-size:14.5px;color:#4a3015;font-weight:400;font-family:'Liberation Serif',serif;-webkit-text-stroke:.25px">5836</div>
<div class="t" style="left:704.60px;width:600px;text-align:right;top:556.58px;font-size:14.5px;color:#4a3015;font-weight:400;font-family:'Liberation Serif',serif;-webkit-text-stroke:.25px">0</div>
<div class="t" style="left:800.40px;width:600px;text-align:right;top:556.58px;font-size:14.5px;color:#4a3015;font-weight:400;font-family:'Liberation Serif',serif;-webkit-text-stroke:.25px">0</div>
<div class="t" style="left:932.50px;width:600px;text-align:right;top:556.58px;font-size:14.5px;color:#4a3015;font-weight:400;font-family:'Liberation Serif',serif;-webkit-text-stroke:.25px">0</div>
<div class="t" style="left:377.30px;width:600px;text-align:center;top:580.58px;font-size:14.5px;color:#4a3015;font-weight:700;font-family:'Liberation Serif',serif;">T</div>
<div class="t" style="left:197.70px;width:600px;text-align:right;top:580.28px;font-size:14.5px;color:#4a3015;font-weight:400;font-family:'Liberation Serif',serif;-webkit-text-stroke:.25px">26555</div>
<div class="t" style="left:344.60px;width:600px;text-align:right;top:580.28px;font-size:14.5px;color:#4a3015;font-weight:400;font-family:'Liberation Serif',serif;-webkit-text-stroke:.25px">0</div>
<div class="t" style="left:438.20px;width:600px;text-align:right;top:580.28px;font-size:14.5px;color:#4a3015;font-weight:400;font-family:'Liberation Serif',serif;-webkit-text-stroke:.25px">18008</div>
<div class="t" style="left:525.50px;width:600px;text-align:right;top:580.28px;font-size:14.5px;color:#4a3015;font-weight:400;font-family:'Liberation Serif',serif;-webkit-text-stroke:.25px">12462</div>
<div class="t" style="left:613.00px;width:600px;text-align:right;top:580.28px;font-size:14.5px;color:#4a3015;font-weight:400;font-family:'Liberation Serif',serif;-webkit-text-stroke:.25px">30470</div>
<div class="t" style="left:704.60px;width:600px;text-align:right;top:580.28px;font-size:14.5px;color:#4a3015;font-weight:400;font-family:'Liberation Serif',serif;-webkit-text-stroke:.25px">0</div>
<div class="t" style="left:800.40px;width:600px;text-align:right;top:580.28px;font-size:14.5px;color:#4a3015;font-weight:400;font-family:'Liberation Serif',serif;-webkit-text-stroke:.25px">0</div>
<div class="t" style="left:932.50px;width:600px;text-align:right;top:580.28px;font-size:14.5px;color:#4a3015;font-weight:400;font-family:'Liberation Serif',serif;-webkit-text-stroke:.25px">0</div>
<div class="t" style="left:644.30px;top:601.44px;font-size:14.5px;color:#4a3015;font-weight:400;font-family:'Liberation Serif',serif;">MEDIUM (4.0 - 9.99)</div>
<div class="t" style="left:321.00px;width:600px;text-align:center;top:647.54px;font-size:14.5px;color:#4a3015;font-weight:400;font-family:'Liberation Serif',serif;">4</div>
<div class="t" style="left:377.30px;width:600px;text-align:center;top:627.94px;font-size:14.5px;color:#4a3015;font-weight:700;font-family:'Liberation Serif',serif;">I</div>
<div class="t" style="left:197.70px;width:600px;text-align:right;top:627.64px;font-size:14.5px;color:#4a3015;font-weight:400;font-family:'Liberation Serif',serif;-webkit-text-stroke:.25px">11986</div>
<div class="t" style="left:344.60px;width:600px;text-align:right;top:627.64px;font-size:14.5px;color:#4a3015;font-weight:400;font-family:'Liberation Serif',serif;-webkit-text-stroke:.25px">0</div>
<div class="t" style="left:438.20px;width:600px;text-align:right;top:627.64px;font-size:14.5px;color:#4a3015;font-weight:400;font-family:'Liberation Serif',serif;-webkit-text-stroke:.25px">17576</div>
<div class="t" style="left:525.50px;width:600px;text-align:right;top:627.64px;font-size:14.5px;color:#4a3015;font-weight:400;font-family:'Liberation Serif',serif;-webkit-text-stroke:.25px">4120</div>
<div class="t" style="left:613.00px;width:600px;text-align:right;top:627.64px;font-size:14.5px;color:#4a3015;font-weight:400;font-family:'Liberation Serif',serif;-webkit-text-stroke:.25px">21696</div>
<div class="t" style="left:704.60px;width:600px;text-align:right;top:627.64px;font-size:14.5px;color:#4a3015;font-weight:400;font-family:'Liberation Serif',serif;-webkit-text-stroke:.25px">0</div>
<div class="t" style="left:800.40px;width:600px;text-align:right;top:627.64px;font-size:14.5px;color:#4a3015;font-weight:400;font-family:'Liberation Serif',serif;-webkit-text-stroke:.25px">0</div>
<div class="t" style="left:932.50px;width:600px;text-align:right;top:627.64px;font-size:14.5px;color:#4a3015;font-weight:400;font-family:'Liberation Serif',serif;-webkit-text-stroke:.25px">0</div>
<div class="t" style="left:377.30px;width:600px;text-align:center;top:654.44px;font-size:14.5px;color:#4a3015;font-weight:700;font-family:'Liberation Serif',serif;">UI</div>
<div class="t" style="left:197.70px;width:600px;text-align:right;top:654.14px;font-size:14.5px;color:#4a3015;font-weight:400;font-family:'Liberation Serif',serif;-webkit-text-stroke:.25px">4615</div>
<div class="t" style="left:344.60px;width:600px;text-align:right;top:654.14px;font-size:14.5px;color:#4a3015;font-weight:400;font-family:'Liberation Serif',serif;-webkit-text-stroke:.25px">0</div>
<div class="t" style="left:438.20px;width:600px;text-align:right;top:654.14px;font-size:14.5px;color:#4a3015;font-weight:400;font-family:'Liberation Serif',serif;-webkit-text-stroke:.25px">1446</div>
<div class="t" style="left:525.50px;width:600px;text-align:right;top:654.14px;font-size:14.5px;color:#4a3015;font-weight:400;font-family:'Liberation Serif',serif;-webkit-text-stroke:.25px">6227</div>
<div class="t" style="left:613.00px;width:600px;text-align:right;top:654.14px;font-size:14.5px;color:#4a3015;font-weight:400;font-family:'Liberation Serif',serif;-webkit-text-stroke:.25px">7673</div>
<div class="t" style="left:704.60px;width:600px;text-align:right;top:654.14px;font-size:14.5px;color:#4a3015;font-weight:400;font-family:'Liberation Serif',serif;-webkit-text-stroke:.25px">0</div>
<div class="t" style="left:800.40px;width:600px;text-align:right;top:654.14px;font-size:14.5px;color:#4a3015;font-weight:400;font-family:'Liberation Serif',serif;-webkit-text-stroke:.25px">0</div>
<div class="t" style="left:932.50px;width:600px;text-align:right;top:654.14px;font-size:14.5px;color:#4a3015;font-weight:400;font-family:'Liberation Serif',serif;-webkit-text-stroke:.25px">0</div>
<div class="t" style="left:377.30px;width:600px;text-align:center;top:678.14px;font-size:14.5px;color:#4a3015;font-weight:700;font-family:'Liberation Serif',serif;">T</div>
<div class="t" style="left:197.70px;width:600px;text-align:right;top:677.84px;font-size:14.5px;color:#4a3015;font-weight:400;font-family:'Liberation Serif',serif;-webkit-text-stroke:.25px">16312</div>
<div class="t" style="left:344.60px;width:600px;text-align:right;top:677.84px;font-size:14.5px;color:#4a3015;font-weight:400;font-family:'Liberation Serif',serif;-webkit-text-stroke:.25px">0</div>
<div class="t" style="left:438.20px;width:600px;text-align:right;top:677.84px;font-size:14.5px;color:#4a3015;font-weight:400;font-family:'Liberation Serif',serif;-webkit-text-stroke:.25px">19022</div>
<div class="t" style="left:525.50px;width:600px;text-align:right;top:677.84px;font-size:14.5px;color:#4a3015;font-weight:400;font-family:'Liberation Serif',serif;-webkit-text-stroke:.25px">10347</div>
<div class="t" style="left:613.00px;width:600px;text-align:right;top:677.84px;font-size:14.5px;color:#4a3015;font-weight:400;font-family:'Liberation Serif',serif;-webkit-text-stroke:.25px">29369</div>
<div class="t" style="left:704.60px;width:600px;text-align:right;top:677.84px;font-size:14.5px;color:#4a3015;font-weight:400;font-family:'Liberation Serif',serif;-webkit-text-stroke:.25px">0</div>
<div class="t" style="left:800.40px;width:600px;text-align:right;top:677.84px;font-size:14.5px;color:#4a3015;font-weight:400;font-family:'Liberation Serif',serif;-webkit-text-stroke:.25px">0</div>
<div class="t" style="left:932.50px;width:600px;text-align:right;top:677.84px;font-size:14.5px;color:#4a3015;font-weight:400;font-family:'Liberation Serif',serif;-webkit-text-stroke:.25px">0</div>
<div class="t" style="left:644.30px;top:699.00px;font-size:14.5px;color:#4a3015;font-weight:400;font-family:'Liberation Serif',serif;">LARGE (10 AND ABOVE)</div>
<div class="t" style="left:321.00px;width:600px;text-align:center;top:745.10px;font-size:14.5px;color:#4a3015;font-weight:400;font-family:'Liberation Serif',serif;">5</div>
<div class="t" style="left:377.30px;width:600px;text-align:center;top:725.50px;font-size:14.5px;color:#4a3015;font-weight:700;font-family:'Liberation Serif',serif;">I</div>
<div class="t" style="left:197.70px;width:600px;text-align:right;top:725.20px;font-size:14.5px;color:#4a3015;font-weight:400;font-family:'Liberation Serif',serif;-webkit-text-stroke:.25px">2005</div>
<div class="t" style="left:344.60px;width:600px;text-align:right;top:725.20px;font-size:14.5px;color:#4a3015;font-weight:400;font-family:'Liberation Serif',serif;-webkit-text-stroke:.25px">0</div>
<div class="t" style="left:438.20px;width:600px;text-align:right;top:725.20px;font-size:14.5px;color:#4a3015;font-weight:400;font-family:'Liberation Serif',serif;-webkit-text-stroke:.25px">3671</div>
<div class="t" style="left:525.50px;width:600px;text-align:right;top:725.20px;font-size:14.5px;color:#4a3015;font-weight:400;font-family:'Liberation Serif',serif;-webkit-text-stroke:.25px">639</div>
<div class="t" style="left:613.00px;width:600px;text-align:right;top:725.20px;font-size:14.5px;color:#4a3015;font-weight:400;font-family:'Liberation Serif',serif;-webkit-text-stroke:.25px">4310</div>
<div class="t" style="left:704.60px;width:600px;text-align:right;top:725.20px;font-size:14.5px;color:#4a3015;font-weight:400;font-family:'Liberation Serif',serif;-webkit-text-stroke:.25px">0</div>
<div class="t" style="left:800.40px;width:600px;text-align:right;top:725.20px;font-size:14.5px;color:#4a3015;font-weight:400;font-family:'Liberation Serif',serif;-webkit-text-stroke:.25px">0</div>
<div class="t" style="left:932.50px;width:600px;text-align:right;top:725.20px;font-size:14.5px;color:#4a3015;font-weight:400;font-family:'Liberation Serif',serif;-webkit-text-stroke:.25px">0</div>
<div class="t" style="left:377.30px;width:600px;text-align:center;top:752.00px;font-size:14.5px;color:#4a3015;font-weight:700;font-family:'Liberation Serif',serif;">UI</div>
<div class="t" style="left:197.70px;width:600px;text-align:right;top:751.70px;font-size:14.5px;color:#4a3015;font-weight:400;font-family:'Liberation Serif',serif;-webkit-text-stroke:.25px">521</div>
<div class="t" style="left:344.60px;width:600px;text-align:right;top:751.70px;font-size:14.5px;color:#4a3015;font-weight:400;font-family:'Liberation Serif',serif;-webkit-text-stroke:.25px">0</div>
<div class="t" style="left:438.20px;width:600px;text-align:right;top:751.70px;font-size:14.5px;color:#4a3015;font-weight:400;font-family:'Liberation Serif',serif;-webkit-text-stroke:.25px">611</div>
<div class="t" style="left:525.50px;width:600px;text-align:right;top:751.70px;font-size:14.5px;color:#4a3015;font-weight:400;font-family:'Liberation Serif',serif;-webkit-text-stroke:.25px">831</div>
<div class="t" style="left:613.00px;width:600px;text-align:right;top:751.70px;font-size:14.5px;color:#4a3015;font-weight:400;font-family:'Liberation Serif',serif;-webkit-text-stroke:.25px">1442</div>
<div class="t" style="left:704.60px;width:600px;text-align:right;top:751.70px;font-size:14.5px;color:#4a3015;font-weight:400;font-family:'Liberation Serif',serif;-webkit-text-stroke:.25px">0</div>
<div class="t" style="left:800.40px;width:600px;text-align:right;top:751.70px;font-size:14.5px;color:#4a3015;font-weight:400;font-family:'Liberation Serif',serif;-webkit-text-stroke:.25px">0</div>
<div class="t" style="left:932.50px;width:600px;text-align:right;top:751.70px;font-size:14.5px;color:#4a3015;font-weight:400;font-family:'Liberation Serif',serif;-webkit-text-stroke:.25px">0</div>
<div class="t" style="left:377.30px;width:600px;text-align:center;top:775.70px;font-size:14.5px;color:#4a3015;font-weight:700;font-family:'Liberation Serif',serif;">T</div>
<div class="t" style="left:197.70px;width:600px;text-align:right;top:775.40px;font-size:14.5px;color:#4a3015;font-weight:400;font-family:'Liberation Serif',serif;-webkit-text-stroke:.25px">2485</div>
<div class="t" style="left:344.60px;width:600px;text-align:right;top:775.40px;font-size:14.5px;color:#4a3015;font-weight:400;font-family:'Liberation Serif',serif;-webkit-text-stroke:.25px">0</div>
<div class="t" style="left:438.20px;width:600px;text-align:right;top:775.40px;font-size:14.5px;color:#4a3015;font-weight:400;font-family:'Liberation Serif',serif;-webkit-text-stroke:.25px">4282</div>
<div class="t" style="left:525.50px;width:600px;text-align:right;top:775.40px;font-size:14.5px;color:#4a3015;font-weight:400;font-family:'Liberation Serif',serif;-webkit-text-stroke:.25px">1470</div>
<div class="t" style="left:613.00px;width:600px;text-align:right;top:775.40px;font-size:14.5px;color:#4a3015;font-weight:400;font-family:'Liberation Serif',serif;-webkit-text-stroke:.25px">5752</div>
<div class="t" style="left:704.60px;width:600px;text-align:right;top:775.40px;font-size:14.5px;color:#4a3015;font-weight:400;font-family:'Liberation Serif',serif;-webkit-text-stroke:.25px">0</div>
<div class="t" style="left:800.40px;width:600px;text-align:right;top:775.40px;font-size:14.5px;color:#4a3015;font-weight:400;font-family:'Liberation Serif',serif;-webkit-text-stroke:.25px">0</div>
<div class="t" style="left:932.50px;width:600px;text-align:right;top:775.40px;font-size:14.5px;color:#4a3015;font-weight:400;font-family:'Liberation Serif',serif;-webkit-text-stroke:.25px">0</div>
<div class="t" style="left:644.30px;top:796.56px;font-size:14.5px;color:#4a3015;font-weight:400;font-family:'Liberation Serif',serif;">ALL GROUPS</div>
<div class="t" style="left:377.30px;width:600px;text-align:center;top:823.06px;font-size:14.5px;color:#4a3015;font-weight:700;font-family:'Liberation Serif',serif;">I</div>
<div class="t" style="left:197.70px;width:600px;text-align:right;top:822.76px;font-size:14.5px;color:#4a3015;font-weight:400;font-family:'Liberation Serif',serif;-webkit-text-stroke:.25px">94185</div>
<div class="t" style="left:344.60px;width:600px;text-align:right;top:822.76px;font-size:14.5px;color:#4a3015;font-weight:400;font-family:'Liberation Serif',serif;-webkit-text-stroke:.25px">0</div>
<div class="t" style="left:438.20px;width:600px;text-align:right;top:822.76px;font-size:14.5px;color:#4a3015;font-weight:400;font-family:'Liberation Serif',serif;-webkit-text-stroke:.25px">67065</div>
<div class="t" style="left:525.50px;width:600px;text-align:right;top:822.76px;font-size:14.5px;color:#4a3015;font-weight:400;font-family:'Liberation Serif',serif;-webkit-text-stroke:.25px">17355</div>
<div class="t" style="left:613.00px;width:600px;text-align:right;top:822.76px;font-size:14.5px;color:#4a3015;font-weight:400;font-family:'Liberation Serif',serif;-webkit-text-stroke:.25px">84420</div>
<div class="t" style="left:704.60px;width:600px;text-align:right;top:822.76px;font-size:14.5px;color:#4a3015;font-weight:400;font-family:'Liberation Serif',serif;-webkit-text-stroke:.25px">0</div>
<div class="t" style="left:800.40px;width:600px;text-align:right;top:822.76px;font-size:14.5px;color:#4a3015;font-weight:400;font-family:'Liberation Serif',serif;-webkit-text-stroke:.25px">0</div>
<div class="t" style="left:932.50px;width:600px;text-align:right;top:822.76px;font-size:14.5px;color:#4a3015;font-weight:400;font-family:'Liberation Serif',serif;-webkit-text-stroke:.25px">0</div>
<div class="t" style="left:377.30px;width:600px;text-align:center;top:849.56px;font-size:14.5px;color:#4a3015;font-weight:700;font-family:'Liberation Serif',serif;">UI</div>
<div class="t" style="left:197.70px;width:600px;text-align:right;top:849.26px;font-size:14.5px;color:#4a3015;font-weight:400;font-family:'Liberation Serif',serif;-webkit-text-stroke:.25px">25275</div>
<div class="t" style="left:344.60px;width:600px;text-align:right;top:849.26px;font-size:14.5px;color:#4a3015;font-weight:400;font-family:'Liberation Serif',serif;-webkit-text-stroke:.25px">0</div>
<div class="t" style="left:438.20px;width:600px;text-align:right;top:849.26px;font-size:14.5px;color:#4a3015;font-weight:400;font-family:'Liberation Serif',serif;-webkit-text-stroke:.25px">9756</div>
<div class="t" style="left:525.50px;width:600px;text-align:right;top:849.26px;font-size:14.5px;color:#4a3015;font-weight:400;font-family:'Liberation Serif',serif;-webkit-text-stroke:.25px">15322</div>
<div class="t" style="left:613.00px;width:600px;text-align:right;top:849.26px;font-size:14.5px;color:#4a3015;font-weight:400;font-family:'Liberation Serif',serif;-webkit-text-stroke:.25px">25078</div>
<div class="t" style="left:704.60px;width:600px;text-align:right;top:849.26px;font-size:14.5px;color:#4a3015;font-weight:400;font-family:'Liberation Serif',serif;-webkit-text-stroke:.25px">0</div>
<div class="t" style="left:800.40px;width:600px;text-align:right;top:849.26px;font-size:14.5px;color:#4a3015;font-weight:400;font-family:'Liberation Serif',serif;-webkit-text-stroke:.25px">0</div>
<div class="t" style="left:932.50px;width:600px;text-align:right;top:849.26px;font-size:14.5px;color:#4a3015;font-weight:400;font-family:'Liberation Serif',serif;-webkit-text-stroke:.25px">0</div>
<div class="t" style="left:377.30px;width:600px;text-align:center;top:873.26px;font-size:14.5px;color:#4a3015;font-weight:700;font-family:'Liberation Serif',serif;">T</div>
<div class="t" style="left:197.70px;width:600px;text-align:right;top:872.96px;font-size:14.5px;color:#4a3015;font-weight:400;font-family:'Liberation Serif',serif;-webkit-text-stroke:.25px">119033</div>
<div class="t" style="left:344.60px;width:600px;text-align:right;top:872.96px;font-size:14.5px;color:#4a3015;font-weight:400;font-family:'Liberation Serif',serif;-webkit-text-stroke:.25px">0</div>
<div class="t" style="left:438.20px;width:600px;text-align:right;top:872.96px;font-size:14.5px;color:#4a3015;font-weight:400;font-family:'Liberation Serif',serif;-webkit-text-stroke:.25px">76821</div>
<div class="t" style="left:525.50px;width:600px;text-align:right;top:872.96px;font-size:14.5px;color:#4a3015;font-weight:400;font-family:'Liberation Serif',serif;-webkit-text-stroke:.25px">32677</div>
<div class="t" style="left:613.00px;width:600px;text-align:right;top:872.96px;font-size:14.5px;color:#4a3015;font-weight:400;font-family:'Liberation Serif',serif;-webkit-text-stroke:.25px">109498</div>
<div class="t" style="left:704.60px;width:600px;text-align:right;top:872.96px;font-size:14.5px;color:#4a3015;font-weight:400;font-family:'Liberation Serif',serif;-webkit-text-stroke:.25px">0</div>
<div class="t" style="left:800.40px;width:600px;text-align:right;top:872.96px;font-size:14.5px;color:#4a3015;font-weight:400;font-family:'Liberation Serif',serif;-webkit-text-stroke:.25px">0</div>
<div class="t" style="left:932.50px;width:600px;text-align:right;top:872.96px;font-size:14.5px;color:#4a3015;font-weight:400;font-family:'Liberation Serif',serif;-webkit-text-stroke:.25px">0</div>
<div class="t" style="left:607.00px;top:903.34px;font-size:14.4px;color:#1e8434;font-weight:700;font-family:'Liberation Serif',serif;">NOTE: I-IRRIGATED</div>
<div class="t" style="left:643.60px;top:922.54px;font-size:14.4px;color:#1e8434;font-weight:700;font-family:'Liberation Serif',serif;">UI-UNIRRIGATED</div>
</div>
<div class="r" style="left:596.00px;top:200.20px;width:2.00px;height:691.30px;background:#f4d2cc;"></div>
<div class="r" style="left:596.00px;top:889.50px;width:941.20px;height:2.00px;background:#f4d2cc;"></div>
<div class="r" style="left:596.00px;top:200.20px;width:941.20px;height:2.20px;background:#f2dcd2;"></div>
<svg class="abs" style="left:0;top:0" width="1920" height="939"><g stroke="rgba(205,28,12,.86)" stroke-width="4.4" stroke-dasharray="8 4" fill="none"><path d="M598 200.2V891.5"/><path d="M1535 891.5V200.2"/><path d="M1537 889.3H596"/></g><path d="M596 202.4H1537.2" stroke="rgba(205,28,12,.86)" stroke-width="4.4" stroke-dasharray="8 4"/></svg>
<svg class="abs" style="left:1540px;top:183px" width="14" height="14"><path d="M2.2 2.4L11.8 12M11.8 2.4L2.2 12" stroke="#15151f" stroke-width="3"/></svg>
<div class="r" style="left:0.00px;top:62.00px;width:223.00px;height:877.00px;background:#eeeeee;"></div>
<div class="r" style="left:223.00px;top:62.00px;width:21.00px;height:877.00px;background:#f1f1f1;"></div>
<div class="r" style="left:240px;top:62px;width:4px;height:877px;background:linear-gradient(90deg,rgba(0,0,0,0),rgba(0,0,0,.035))"></div>
<div class="r" style="left:0.00px;top:62.00px;width:244.00px;height:1.00px;background:#c9c9c9;"></div>
<div class="r" style="left:0;top:63px;width:244px;height:4px;background:linear-gradient(rgba(0,0,0,.04),rgba(0,0,0,0))"></div>
<svg class="abs" style="left:228px;top:70px" width="12" height="8"><path d="M1 7L5.6 1.2L10.2 7Z" fill="#a3a3a3"/></svg>
<svg class="abs" style="left:228px;top:926px" width="12" height="8"><path d="M1 .8L5.6 6.8L10.2 .8Z" fill="#a3a3a3"/></svg>
<svg class="abs" style="left:7px;top:97px" width="18" height="19"><path d="M3.5 3.5L14.5 14.8M14.5 3.5L3.5 14.8" stroke="#6e6e6e" stroke-width="3.6"/></svg>
<div class="r" style="left:27.00px;top:95.00px;width:178.00px;height:229.00px;background:#5bc0de;"></div>
<div class="r" style="left:29.00px;top:97.00px;width:174.00px;height:225.00px;background:#ffffff;"></div>
<div class="abs" style="left:29px;top:97px;width:174px;height:225px;overflow:hidden;background:#fff">
<div style="position:absolute;left:-568px;top:-80px;width:1920px;height:1400px;transform-origin:568px 80px;transform:scale(0.1742,0.1730)" class="th">
<div class="t" style="left:786.00px;width:600px;text-align:center;top:114.86px;font-size:14.5px;color:#333;font-weight:700;font-family:'Liberation Serif',serif;">INPUT SURVEY, 2006-2007</div>
<div class="t" style="left:746.70px;top:144.86px;font-size:14.5px;color:#2e8b3e;font-weight:700;font-family:'Liberation Serif',serif;">TABLE 5J : ESTIMATED AREA UNDER PADDY  TREATED WITH AZETOBACTOR BY SIZE GROUPS.</div>
<div class="t" style="left:637.00px;top:182.52px;font-size:14.9px;color:#2e8b3e;font-weight:700;font-family:'Liberation Serif',serif;">STATE :</div>
<div class="t" style="left:698.20px;top:182.90px;font-size:14.45px;color:#333;font-weight:700;font-family:'Liberation Serif',serif;">ANDHRA PRADESH</div>
<div class="t" style="left:1082.00px;top:183.02px;font-size:14.3px;color:#2e8b3e;font-weight:700;font-family:'Liberation Serif',serif;">DISTRICT :<span style="color:#333">ADILABAD</span></div>
<div class="t" style="left:1428.00px;top:182.94px;font-size:14.4px;color:#2e8b3e;font-weight:700;font-family:'Liberation Serif',serif;">PAGE NO. <span style="color:#333">1</span></div>
<div class="r" style="left:598.00px;top:202.50px;width:939.50px;height:102.50px;background:#2b7222;"></div>
<div class="r" style="left:707px;top:245.80px;width:830.50px;height:1px;background:#5f9a55"></div>
<div class="r" style="left:598px;top:284.60px;width:939.50px;height:1px;background:#5f9a55"></div>
<div class="r" style="left:645.00px;top:202.50px;width:1px;height:102.50px;background:#5f9a55"></div>
<div class="r" style="left:706.30px;top:202.50px;width:1px;height:102.50px;background:#5f9a55"></div>
<div class="r" style="left:802.50px;top:246.30px;width:1px;height:58.70px;background:#5f9a55"></div>
<div class="r" style="left:947.80px;top:202.50px;width:1px;height:102.50px;background:#5f9a55"></div>
<div class="r" style="left:1042.50px;top:246.30px;width:1px;height:58.70px;background:#5f9a55"></div>
<div class="r" style="left:1124.50px;top:246.30px;width:1px;height:58.70px;background:#5f9a55"></div>
<div class="r" style="left:1216.20px;top:202.50px;width:1px;height:102.50px;background:#5f9a55"></div>
<div class="r" style="left:1306.50px;top:246.30px;width:1px;height:58.70px;background:#5f9a55"></div>
<div class="r" style="left:1401.50px;top:246.30px;width:1px;height:58.70px;background:#5f9a55"></div>
<div class="t" style="left:320.60px;width:600px;text-align:center;top:208.98px;font-size:11.6px;color:#cfe3c8;font-weight:700;font-family:'Liberation Serif',serif;">Sl.No</div>
<div class="t" style="left:377.50px;width:600px;text-align:center;top:208.98px;font-size:11.6px;color:#cfe3c8;font-weight:700;font-family:'Liberation Serif',serif;">SIZE</div>
<div class="t" style="left:377.50px;width:600px;text-align:center;top:225.19px;font-size:11.6px;color:#cfe3c8;font-weight:700;font-family:'Liberation Serif',serif;">GROUP</div>
<div class="t" style="left:377.50px;width:600px;text-align:center;top:241.28px;font-size:11.6px;color:#cfe3c8;font-weight:700;font-family:'Liberation Serif',serif;">(HA)</div>
<div class="t" style="left:528.20px;width:600px;text-align:center;top:208.98px;font-size:11.6px;color:#cfe3c8;font-weight:700;font-family:'Liberation Serif',serif;">NO. OF HOLDINGS GROWING</div>
<div class="t" style="left:528.20px;width:600px;text-align:center;top:225.19px;font-size:11.6px;color:#cfe3c8;font-weight:700;font-family:'Liberation Serif',serif;">THE CROP</div>
<div class="t" style="left:784.50px;width:600px;text-align:center;top:208.98px;font-size:11.6px;color:#cfe3c8;font-weight:700;font-family:'Liberation Serif',serif;">AREA UNDER THE CROP</div>
<div class="t" style="left:1078.60px;width:600px;text-align:center;top:208.98px;font-size:11.6px;color:#cfe3c8;font-weight:700;font-family:'Liberation Serif',serif;">AREA UNDER THE CROP TREATED WITH</div>
<div class="t" style="left:1078.60px;width:600px;text-align:center;top:225.19px;font-size:11.6px;color:#cfe3c8;font-weight:700;font-family:'Liberation Serif',serif;">THE  MANURE</div>
<div class="t" style="left:454.30px;width:600px;text-align:center;top:252.68px;font-size:11.6px;color:#cfe3c8;font-weight:700;font-family:'Liberation Serif',serif;">TOTAL NO.</div>
<div class="t" style="left:576.20px;width:600px;text-align:center;top:248.89px;font-size:11.6px;color:#cfe3c8;font-weight:700;font-family:'Liberation Serif',serif;">NO. TREATED WITH</div>
<div class="t" style="left:576.20px;width:600px;text-align:center;top:264.99px;font-size:11.6px;color:#cfe3c8;font-weight:700;font-family:'Liberation Serif',serif;">THE  MANURE</div>
<div class="t" style="left:695.40px;width:600px;text-align:center;top:252.68px;font-size:11.6px;color:#cfe3c8;font-weight:700;font-family:'Liberation Serif',serif;">HYV</div>
<div class="t" style="left:784.00px;width:600px;text-align:center;top:252.68px;font-size:11.6px;color:#cfe3c8;font-weight:700;font-family:'Liberation Serif',serif;">OTHERS</div>
<div class="t" style="left:871.30px;width:600px;text-align:center;top:252.68px;font-size:11.6px;color:#cfe3c8;font-weight:700;font-family:'Liberation Serif',serif;">TOTAL</div>
<div class="t" style="left:962.00px;width:600px;text-align:center;top:252.68px;font-size:11.6px;color:#cfe3c8;font-weight:700;font-family:'Liberation Serif',serif;">HYV</div>
<div class="t" style="left:1053.00px;width:600px;text-align:center;top:252.68px;font-size:11.6px;color:#cfe3c8;font-weight:700;font-family:'Liberation Serif',serif;">OTHERS</div>
<div class="t" style="left:1169.20px;width:600px;text-align:center;top:252.68px;font-size:11.6px;color:#cfe3c8;font-weight:700;font-family:'Liberation Serif',serif;">TOTAL</div>
<div class="t" style="left:320.60px;width:600px;text-align:center;top:290.29px;font-size:11.6px;color:#cfe3c8;font-weight:700;font-family:'Liberation Serif',serif;">(1)</div>
<div class="t" style="left:377.50px;width:600px;text-align:center;top:290.29px;font-size:11.6px;color:#cfe3c8;font-weight:700;font-family:'Liberation Serif',serif;">(2)</div>
<div class="t" style="left:454.30px;width:600px;text-align:center;top:290.29px;font-size:11.6px;color:#cfe3c8;font-weight:700;font-family:'Liberation Serif',serif;">(3)</div>
<div class="t" style="left:576.20px;width:600px;text-align:center;top:290.29px;font-size:11.6px;color:#cfe3c8;font-weight:700;font-family:'Liberation Serif',serif;">(4)</div>
<div class="t" style="left:695.40px;width:600px;text-align:center;top:290.29px;font-size:11.6px;color:#cfe3c8;font-weight:700;font-family:'Liberation Serif',serif;">(5)</div>
<div class="t" style="left:784.00px;width:600px;text-align:center;top:290.29px;font-size:11.6px;color:#cfe3c8;font-weight:700;font-family:'Liberation Serif',serif;">(6)</div>
<div class="t" style="left:871.30px;width:600px;text-align:center;top:290.29px;font-size:11.6px;color:#cfe3c8;font-weight:700;font-family:'Liberation Serif',serif;">(7)</div>
<div class="t" style="left:962.00px;width:600px;text-align:center;top:290.29px;font-size:11.6px;color:#cfe3c8;font-weight:700;font-family:'Liberation Serif',serif;">(8)</div>
<div class="t" style="left:1053.50px;width:600px;text-align:center;top:290.29px;font-size:11.6px;color:#cfe3c8;font-weight:700;font-family:'Liberation Serif',serif;">(9)</div>
<div class="t" style="left:1169.20px;width:600px;text-align:center;top:290.29px;font-size:11.6px;color:#cfe3c8;font-weight:700;font-family:'Liberation Serif',serif;">(10)</div>
<div class="r" style="left:598.00px;top:305.40px;width:939.50px;height:97.56px;background:#b6e35c;"></div>
<div class="r" style="left:644.00px;top:305.40px;width:893.50px;height:21.00px;background:#e6e86a;"></div>
<div class="r" style="left:598.00px;top:402.96px;width:939.50px;height:97.56px;background:#b6e35c;"></div>
<div class="r" style="left:644.00px;top:402.96px;width:893.50px;height:21.00px;background:#e6e86a;"></div>
<div class="r" style="left:598.00px;top:500.52px;width:939.50px;height:97.56px;background:#b6e35c;"></div>
<div class="r" style="left:644.00px;top:500.52px;width:893.50px;height:21.00px;background:#e6e86a;"></div>
<div class="r" style="left:598.00px;top:598.08px;width:939.50px;height:97.56px;background:#b6e35c;"></div>
<div class="r" style="left:644.00px;top:598.08px;width:893.50px;height:21.00px;background:#e6e86a;"></div>
<div class="r" style="left:598.00px;top:695.64px;width:939.50px;height:97.56px;background:#b6e35c;"></div>
<div class="r" style="left:644.00px;top:695.64px;width:893.50px;height:21.00px;background:#e6e86a;"></div>
<div class="r" style="left:598.00px;top:793.20px;width:939.50px;height:96.30px;background:#55bb40;"></div>
<div class="r" style="left:644.00px;top:793.20px;width:893.50px;height:21.00px;background:#e6e86a;"></div>
<div class="r" style="left:647px;top:349.10px;width:890.50px;height:1px;background:#d3f08f"></div>
<div class="r" style="left:647px;top:375.50px;width:890.50px;height:1px;background:#d3f08f"></div>
<div class="r" style="left:643.50px;top:305.40px;width:1px;height:97.56px;background:#d3f08f"></div>
<div class="r" style="left:704.50px;top:326.40px;width:1px;height:76.56px;background:#d3f08f"></div>
<div class="r" style="left:801.90px;top:326.40px;width:1px;height:76.56px;background:#d3f08f"></div>
<div class="r" style="left:948.00px;top:326.40px;width:1px;height:76.56px;background:#d3f08f"></div>
<div class="r" style="left:1042.20px;top:326.40px;width:1px;height:76.56px;background:#d3f08f"></div>
<div class="r" style="left:1124.50px;top:326.40px;width:1px;height:76.56px;background:#d3f08f"></div>
<div class="r" style="left:1217.00px;top:326.40px;width:1px;height:76.56px;background:#d3f08f"></div>
<div class="r" style="left:1307.30px;top:326.40px;width:1px;height:76.56px;background:#d3f08f"></div>
<div class="r" style="left:1403.10px;top:326.40px;width:1px;height:76.56px;background:#d3f08f"></div>
<div class="r" style="left:647px;top:446.66px;width:890.50px;height:1px;background:#d3f08f"></div>
<div class="r" style="left:647px;top:473.06px;width:890.50px;height:1px;background:#d3f08f"></div>
<div class="r" style="left:598px;top:402.46px;width:939.50px;height:1px;background:#d3f08f"></div>
<div class="r" style="left:643.50px;top:402.96px;width:1px;height:97.56px;background:#d3f08f"></div>
<div class="r" style="left:704.50px;top:423.96px;width:1px;height:76.56px;background:#d3f08f"></div>
<div class="r" style="left:801.90px;top:423.96px;width:1px;height:76.56px;background:#d3f08f"></div>
<div class="r" style="left:948.00px;top:423.96px;width:1px;height:76.56px;background:#d3f08f"></div>
<div class="r" style="left:1042.20px;top:423.96px;width:1px;height:76.56px;background:#d3f08f"></div>
<div class="r" style="left:1124.50px;top:423.96px;width:1px;height:76.56px;background:#d3f08f"></div>
<div class="r" style="left:1217.00px;top:423.96px;width:1px;height:76.56px;background:#d3f08f"></div>
<div class="r" style="left:1307.30px;top:423.96px;width:1px;height:76.56px;background:#d3f08f"></div>
<div class="r" style="left:1403.10px;top:423.96px;width:1px;height:76.56px;background:#d3f08f"></div>
<div class="r" style="left:647px;top:544.22px;width:890.50px;height:1px;background:#d3f08f"></div>
<div class="r" style="left:647px;top:570.62px;width:890.50px;height:1px;background:#d3f08f"></div>
<div class="r" style="left:598px;top:500.02px;width:939.50px;height:1px;background:#d3f08f"></div>
<div class="r" style="left:643.50px;top:500.52px;width:1px;height:97.56px;background:#d3f08f"></div>
<div class="r" style="left:704.50px;top:521.52px;width:1px;height:76.56px;background:#d3f08f"></div>
<div class="r" style="left:801.90px;top:521.52px;width:1px;height:76.56px;background:#d3f08f"></div>
<div class="r" style="left:948.00px;top:521.52px;width:1px;height:76.56px;background:#d3f08f"></div>
<div class="r" style="left:1042.20px;top:521.52px;width:1px;height:76.56px;background:#d3f08f"></div>
<div class="r" style="left:1124.50px;top:521.52px;width:1px;height:76.56px;background:#d3f08f"></div>
<div class="r" style="left:1217.00px;top:521.52px;width:1px;height:76.56px;background:#d3f08f"></div>
<div class="r" style="left:1307.30px;top:521.52px;width:1px;height:76.56px;background:#d3f08f"></div>
<div class="r" style="left:1403.10px;top:521.52px;width:1px;height:76.56px;background:#d3f08f"></div>
<div class="r" style="left:647px;top:641.78px;width:890.50px;height:1px;background:#d3f08f"></div>
<div class="r" style="left:647px;top:668.18px;width:890.50px;height:1px;background:#d3f08f"></div>
<div class="r" style="left:598px;top:597.58px;width:939.50px;height:1px;background:#d3f08f"></div>
<div class="r" style="left:643.50px;top:598.08px;width:1px;height:97.56px;background:#d3f08f"></div>
<div class="r" style="left:704.50px;top:619.08px;width:1px;height:76.56px;background:#d3f08f"></div>
<div class="r" style="left:801.90px;top:619.08px;width:1px;height:76.56px;background:#d3f08f"></div>
<div class="r" style="left:948.00px;top:619.08px;width:1px;height:76.56px;background:#d3f08f"></div>
<div class="r" style="left:1042.20px;top:619.08px;width:1px;height:76.56px;background:#d3f08f"></div>
<div class="r" style="left:1124.50px;top:619.08px;width:1px;height:76.56px;background:#d3f08f"></div>
<div class="r" style="left:1217.00px;top:619.08px;width:1px;height:76.56px;background:#d3f08f"></div>
<div class="r" style="left:1307.30px;top:619.08px;width:1px;height:76.56px;background:#d3f08f"></div>
<div class="r" style="left:1403.10px;top:619.08px;width:1px;height:76.56px;background:#d3f08f"></div>
<div class="r" style="left:647px;top:739.34px;width:890.50px;height:1px;background:#d3f08f"></div>
<div class="r" style="left:647px;top:765.74px;width:890.50px;height:1px;background:#d3f08f"></div>
<div class="r" style="left:598px;top:695.14px;width:939.50px;height:1px;background:#d3f08f"></div>
<div class="r" style="left:643.50px;top:695.64px;width:1px;height:97.56px;background:#d3f08f"></div>
<div class="r" style="left:704.50px;top:716.64px;width:1px;height:76.56px;background:#d3f08f"></div>
<div class="r" style="left:801.90px;top:716.64px;width:1px;height:76.56px;background:#d3f08f"></div>
<div class="r" style="left:948.00px;top:716.64px;width:1px;height:76.56px;background:#d3f08f"></div>
<div class="r" style="left:1042.20px;top:716.64px;width:1px;height:76.56px;background:#d3f08f"></div>
<div class="r" style="left:1124.50px;top:716.64px;width:1px;height:76.56px;background:#d3f08f"></div>
<div class="r" style="left:1217.00px;top:716.64px;width:1px;height:76.56px;background:#d3f08f"></div>
<div class="r" style="left:1307.30px;top:716.64px;width:1px;height:76.56px;background:#d3f08f"></div>
<div class="r" style="left:1403.10px;top:716.64px;width:1px;height:76.56px;background:#d3f08f"></div>
<div class="r" style="left:647px;top:836.90px;width:890.50px;height:1px;background:#8fd07c"></div>
<div class="r" style="left:647px;top:863.30px;width:890.50px;height:1px;background:#8fd07c"></div>
<div class="r" style="left:598px;top:792.70px;width:939.50px;height:1px;background:#d3f08f"></div>
<div class="r" style="left:643.50px;top:793.20px;width:1px;height:96.30px;background:#8fd07c"></div>
<div class="r" style="left:704.50px;top:814.20px;width:1px;height:75.30px;background:#8fd07c"></div>
<div class="r" style="left:801.90px;top:814.20px;width:1px;height:75.30px;background:#8fd07c"></div>
<div class="r" style="left:948.00px;top:814.20px;width:1px;height:75.30px;background:#8fd07c"></div>
<div class="r" style="left:1042.20px;top:814.20px;width:1px;height:75.30px;background:#8fd07c"></div>
<div class="r" style="left:1124.50px;top:814.20px;width:1px;height:75.30px;background:#8fd07c"></div>
<div class="r" style="left:1217.00px;top:814.20px;width:1px;height:75.30px;background:#8fd07c"></div>
<div class="r" style="left:1307.30px;top:814.20px;width:1px;height:75.30px;background:#8fd07c"></div>
<div class="r" style="left:1403.10px;top:814.20px;width:1px;height:75.30px;background:#8fd07c"></div>
<div class="t" style="left:644.30px;top:308.76px;font-size:14.5px;color:#3a4a20;font-weight:400;font-family:'Liberation Serif',serif;">MARGINAL (BELOW 1.0)</div>
<div class="t" style="left:321.00px;width:600px;text-align:center;top:354.86px;font-size:14.5px;color:#3a4a20;font-weight:400;font-family:'Liberation Serif',serif;">1</div>
<div class="t" style="left:377.30px;width:600px;text-align:center;top:335.26px;font-size:14.5px;color:#3a4a20;font-weight:700;font-family:'Liberation Serif',serif;">I</div>
<div class="t" style="left:197.70px;width:600px;text-align:right;top:334.96px;font-size:14.5px;color:#3a4a20;font-weight:400;font-family:'Liberation Serif',serif;-webkit-text-stroke:.25px">39053</div>
<div class="t" style="left:344.60px;width:600px;text-align:right;top:334.96px;font-size:14.5px;color:#3a4a20;font-weight:400;font-family:'Liberation Serif',serif;-webkit-text-stroke:.25px">0</div>
<div class="t" style="left:438.20px;width:600px;text-align:right;top:334.96px;font-size:14.5px;color:#3a4a20;font-weight:400;font-family:'Liberation Serif',serif;-webkit-text-stroke:.25px">12142</div>
<div class="t" style="left:525.50px;width:600px;text-align:right;top:334.96px;font-size:14.5px;color:#3a4a20;font-weight:400;font-family:'Liberation Serif',serif;-webkit-text-stroke:.25px">3322</div>
<div class="t" style="left:613.00px;width:600px;text-align:right;top:334.96px;font-size:14.5px;color:#3a4a20;font-weight:400;font-family:'Liberation Serif',serif;-webkit-text-stroke:.25px">15464</div>
<div class="t" style="left:704.60px;width:600px;text-align:right;top:334.96px;font-size:14.5px;color:#3a4a20;font-weight:400;font-family:'Liberation Serif',serif;-webkit-text-stroke:.25px">0</div>
<div class="t" style="left:800.40px;width:600px;text-align:right;top:334.96px;font-size:14.5px;color:#3a4a20;font-weight:400;font-family:'Liberation Serif',serif;-webkit-text-stroke:.25px">0</div>
<div class="t" style="left:932.50px;width:600px;text-align:right;top:334.96px;font-size:14.5px;color:#3a4a20;font-weight:400;font-family:'Liberation Serif',serif;-webkit-text-stroke:.25px">0</div>
<div class="t" style="left:377.30px;width:600px;text-align:center;top:361.76px;font-size:14.5px;color:#3a4a20;font-weight:700;font-family:'Liberation Serif',serif;">UI</div>
<div class="t" style="left:197.70px;width:600px;text-align:right;top:361.46px;font-size:14.5px;color:#3a4a20;font-weight:400;font-family:'Liberation Serif',serif;-webkit-text-stroke:.25px">7429</div>
<div class="t" style="left:344.60px;width:600px;text-align:right;top:361.46px;font-size:14.5px;color:#3a4a20;font-weight:400;font-family:'Liberation Serif',serif;-webkit-text-stroke:.25px">0</div>
<div class="t" style="left:438.20px;width:600px;text-align:right;top:361.46px;font-size:14.5px;color:#3a4a20;font-weight:400;font-family:'Liberation Serif',serif;-webkit-text-stroke:.25px">2088</div>
<div class="t" style="left:525.50px;width:600px;text-align:right;top:361.46px;font-size:14.5px;color:#3a4a20;font-weight:400;font-family:'Liberation Serif',serif;-webkit-text-stroke:.25px">1560</div>
<div class="t" style="left:613.00px;width:600px;text-align:right;top:361.46px;font-size:14.5px;color:#3a4a20;font-weight:400;font-family:'Liberation Serif',serif;-webkit-text-stroke:.25px">3648</div>
<div class="t" style="left:704.60px;width:600px;text-align:right;top:361.46px;font-size:14.5px;color:#3a4a20;font-weight:400;font-family:'Liberation Serif',serif;-webkit-text-stroke:.25px">0</div>
<div class="t" style="left:800.40px;width:600px;text-align:right;top:361.46px;font-size:14.5px;color:#3a4a20;font-weight:400;font-family:'Liberation Serif',serif;-webkit-text-stroke:.25px">0</div>
<div class="t" style="left:932.50px;width:600px;text-align:right;top:361.46px;font-size:14.5px;color:#3a4a20;font-weight:400;font-family:'Liberation Serif',serif;-webkit-text-stroke:.25px">0</div>
<div class="t" style="left:377.30px;width:600px;text-align:center;top:385.46px;font-size:14.5px;color:#3a4a20;font-weight:700;font-family:'Liberation Serif',serif;">T</div>
<div class="t" style="left:197.70px;width:600px;text-align:right;top:385.16px;font-size:14.5px;color:#3a4a20;font-weight:400;font-family:'Liberation Serif',serif;-webkit-text-stroke:.25px">46484</div>
<div class="t" style="left:344.60px;width:600px;text-align:right;top:385.16px;font-size:14.5px;color:#3a4a20;font-weight:400;font-family:'Liberation Serif',serif;-webkit-text-stroke:.25px">0</div>
<div class="t" style="left:438.20px;width:600px;text-align:right;top:385.16px;font-size:14.5px;color:#3a4a20;font-weight:400;font-family:'Liberation Serif',serif;-webkit-text-stroke:.25px">14230</div>
<div class="t" style="left:525.50px;width:600px;text-align:right;top:385.16px;font-size:14.5px;color:#3a4a20;font-weight:400;font-family:'Liberation Serif',serif;-webkit-text-stroke:.25px">4882</div>
<div class="t" style="left:613.00px;width:600px;text-align:right;top:385.16px;font-size:14.5px;color:#3a4a20;font-weight:400;font-family:'Liberation Serif',serif;-webkit-text-stroke:.25px">19112</div>
<div class="t" style="left:704.60px;width:600px;text-align:right;top:385.16px;font-size:14.5px;color:#3a4a20;font-weight:400;font-family:'Liberation Serif',serif;-webkit-text-stroke:.25px">0</div>
<div class="t" style="left:800.40px;width:600px;text-align:right;top:385.16px;font-size:14.5px;color:#3a4a20;font-weight:400;font-family:'Liberation Serif',serif;-webkit-text-stroke:.25px">0</div>
<div class="t" style="left:932.50px;width:600px;text-align:right;top:385.16px;font-size:14.5px;color:#3a4a20;font-weight:400;font-family:'Liberation Serif',serif;-webkit-text-stroke:.25px">0</div>
<div class="t" style="left:644.30px;top:406.32px;font-size:14.5px;color:#3a4a20;font-weight:400;font-family:'Liberation Serif',serif;">SMALL (1.0 - 1.99)</div>
<div class="t" style="left:321.00px;width:600px;text-align:center;top:452.42px;font-size:14.5px;color:#3a4a20;font-weight:400;font-family:'Liberation Serif',serif;">2</div>
<div class="t" style="left:377.30px;width:600px;text-align:center;top:432.82px;font-size:14.5px;color:#3a4a20;font-weight:700;font-family:'Liberation Serif',serif;">I</div>
<div class="t" style="left:197.70px;width:600px;text-align:right;top:432.52px;font-size:14.5px;color:#3a4a20;font-weight:400;font-family:'Liberation Serif',serif;-webkit-text-stroke:.25px">20341</div>
<div class="t" style="left:344.60px;width:600px;text-align:right;top:432.52px;font-size:14.5px;color:#3a4a20;font-weight:400;font-family:'Liberation Serif',serif;-webkit-text-stroke:.25px">0</div>
<div class="t" style="left:438.20px;width:600px;text-align:right;top:432.52px;font-size:14.5px;color:#3a4a20;font-weight:400;font-family:'Liberation Serif',serif;-webkit-text-stroke:.25px">16685</div>
<div class="t" style="left:525.50px;width:600px;text-align:right;top:432.52px;font-size:14.5px;color:#3a4a20;font-weight:400;font-family:'Liberation Serif',serif;-webkit-text-stroke:.25px">1631</div>
<div class="t" style="left:613.00px;width:600px;text-align:right;top:432.52px;font-size:14.5px;color:#3a4a20;font-weight:400;font-family:'Liberation Serif',serif;-webkit-text-stroke:.25px">18316</div>
<div class="t" style="left:704.60px;width:600px;text-align:right;top:432.52px;font-size:14.5px;color:#3a4a20;font-weight:400;font-family:'Liberation Serif',serif;-webkit-text-stroke:.25px">0</div>
<div class="t" style="left:800.40px;width:600px;text-align:right;top:432.52px;font-size:14.5px;color:#3a4a20;font-weight:400;font-family:'Liberation Serif',serif;-webkit-text-stroke:.25px">0</div>
<div class="t" style="left:932.50px;width:600px;text-align:right;top:432.52px;font-size:14.5px;color:#3a4a20;font-weight:400;font-family:'Liberation Serif',serif;-webkit-text-stroke:.25px">0</div>
<div class="t" style="left:377.30px;width:600px;text-align:center;top:459.32px;font-size:14.5px;color:#3a4a20;font-weight:700;font-family:'Liberation Serif',serif;">UI</div>
<div class="t" style="left:197.70px;width:600px;text-align:right;top:459.02px;font-size:14.5px;color:#3a4a20;font-weight:400;font-family:'Liberation Serif',serif;-webkit-text-stroke:.25px">6854</div>
<div class="t" style="left:344.60px;width:600px;text-align:right;top:459.02px;font-size:14.5px;color:#3a4a20;font-weight:400;font-family:'Liberation Serif',serif;-webkit-text-stroke:.25px">0</div>
<div class="t" style="left:438.20px;width:600px;text-align:right;top:459.02px;font-size:14.5px;color:#3a4a20;font-weight:400;font-family:'Liberation Serif',serif;-webkit-text-stroke:.25px">4594</div>
<div class="t" style="left:525.50px;width:600px;text-align:right;top:459.02px;font-size:14.5px;color:#3a4a20;font-weight:400;font-family:'Liberation Serif',serif;-webkit-text-stroke:.25px">1885</div>
<div class="t" style="left:613.00px;width:600px;text-align:right;top:459.02px;font-size:14.5px;color:#3a4a20;font-weight:400;font-family:'Liberation Serif',serif;-webkit-text-stroke:.25px">6479</div>
<div class="t" style="left:704.60px;width:600px;text-align:right;top:459.02px;font-size:14.5px;color:#3a4a20;font-weight:400;font-family:'Liberation Serif',serif;-webkit-text-stroke:.25px">0</div>
<div class="t" style="left:800.40px;width:600px;text-align:right;top:459.02px;font-size:14.5px;color:#3a4a20;font-weight:400;font-family:'Liberation Serif',serif;-webkit-text-stroke:.25px">0</div>
<div class="t" style="left:932.50px;width:600px;text-align:right;top:459.02px;font-size:14.5px;color:#3a4a20;font-weight:400;font-family:'Liberation Serif',serif;-webkit-text-stroke:.25px">0</div>
<div class="t" style="left:377.30px;width:600px;text-align:center;top:483.02px;font-size:14.5px;color:#3a4a20;font-weight:700;font-family:'Liberation Serif',serif;">T</div>
<div class="t" style="left:197.70px;width:600px;text-align:right;top:482.72px;font-size:14.5px;color:#3a4a20;font-weight:400;font-family:'Liberation Serif',serif;-webkit-text-stroke:.25px">27197</div>
<div class="t" style="left:344.60px;width:600px;text-align:right;top:482.72px;font-size:14.5px;color:#3a4a20;font-weight:400;font-family:'Liberation Serif',serif;-webkit-text-stroke:.25px">0</div>
<div class="t" style="left:438.20px;width:600px;text-align:right;top:482.72px;font-size:14.5px;color:#3a4a20;font-weight:400;font-family:'Liberation Serif',serif;-webkit-text-stroke:.25px">21279</div>
<div class="t" style="left:525.50px;width:600px;text-align:right;top:482.72px;font-size:14.5px;color:#3a4a20;font-weight:400;font-family:'Liberation Serif',serif;-webkit-text-stroke:.25px">3516</div>
<div class="t" style="left:613.00px;width:600px;text-align:right;top:482.72px;font-size:14.5px;color:#3a4a20;font-weight:400;font-family:'Liberation Serif',serif;-webkit-text-stroke:.25px">24795</div>
<div class="t" style="left:704.60px;width:600px;text-align:right;top:482.72px;font-size:14.5px;color:#3a4a20;font-weight:400;font-family:'Liberation Serif',serif;-webkit-text-stroke:.25px">0</div>
<div class="t" style="left:800.40px;width:600px;text-align:right;top:482.72px;font-size:14.5px;color:#3a4a20;font-weight:400;font-family:'Liberation Serif',serif;-webkit-text-stroke:.25px">0</div>
<div class="t" style="left:932.50px;width:600px;text-align:right;top:482.72px;font-size:14.5px;color:#3a4a20;font-weight:400;font-family:'Liberation Serif',serif;-webkit-text-stroke:.25px">0</div>
<div class="t" style="left:644.30px;top:503.88px;font-size:14.5px;color:#3a4a20;font-weight:400;font-family:'Liberation Serif',serif;">SEMI-MEDIUM (2.0 - 3.99)</div>
<div class="t" style="left:321.00px;width:600px;text-align:center;top:549.98px;font-size:14.5px;color:#3a4a20;font-weight:400;font-family:'Liberation Serif',serif;">3</div>
<div class="t" style="left:377.30px;width:600px;text-align:center;top:530.38px;font-size:14.5px;color:#3a4a20;font-weight:700;font-family:'Liberation Serif',serif;">I</div>
<div class="t" style="left:197.70px;width:600px;text-align:right;top:530.08px;font-size:14.5px;color:#3a4a20;font-weight:400;font-family:'Liberation Serif',serif;-webkit-text-stroke:.25px">20800</div>
<div class="t" style="left:344.60px;width:600px;text-align:right;top:530.08px;font-size:14.5px;color:#3a4a20;font-weight:400;font-family:'Liberation Serif',serif;-webkit-text-stroke:.25px">0</div>
<div class="t" style="left:438.20px;width:600px;text-align:right;top:530.08px;font-size:14.5px;color:#3a4a20;font-weight:400;font-family:'Liberation Serif',serif;-webkit-text-stroke:.25px">16991</div>
<div class="t" style="left:525.50px;width:600px;text-align:right;top:530.08px;font-size:14.5px;color:#3a4a20;font-weight:400;font-family:'Liberation Serif',serif;-webkit-text-stroke:.25px">7643</div>
<div class="t" style="left:613.00px;width:600px;text-align:right;top:530.08px;font-size:14.5px;color:#3a4a20;font-weight:400;font-family:'Liberation Serif',serif;-webkit-text-stroke:.25px">24634</div>
<div class="t" style="left:704.60px;width:600px;text-align:right;top:530.08px;font-size:14.5px;color:#3a4a20;font-weight:400;font-family:'Liberation Serif',serif;-webkit-text-stroke:.25px">0</div>
<div class="t" style="left:800.40px;width:600px;text-align:right;top:530.08px;font-size:14.5px;color:#3a4a20;font-weight:400;font-family:'Liberation Serif',serif;-webkit-text-stroke:.25px">0</div>
<div class="t" style="left:932.50px;width:600px;text-align:right;top:530.08px;font-size:14.5px;color:#3a4a20;font-weight:400;font-family:'Liberation Serif',serif;-webkit-text-stroke:.25px">0</div>
<div class="t" style="left:377.30px;width:600px;text-align:center;top:556.88px;font-size:14.5px;color:#3a4a20;font-weight:700;font-family:'Liberation Serif',serif;">UI</div>
<div class="t" style="left:197.70px;width:600px;text-align:right;top:556.58px;font-size:14.5px;color:#3a4a20;font-weight:400;font-family:'Liberation Serif',serif;-webkit-text-stroke:.25px">5856</div>
<div class="t" style="left:344.60px;width:600px;text-align:right;top:556.58px;font-size:14.5px;color:#3a4a20;font-weight:400;font-family:'Liberation Serif',serif;-webkit-text-stroke:.25px">0</div>
<div class="t" style="left:438.20px;width:600px;text-align:right;top:556.58px;font-size:14.5px;color:#3a4a20;font-weight:400;font-family:'Liberation Serif',serif;-webkit-text-stroke:.25px">1017</div>
<div class="t" style="left:525.50px;width:600px;text-align:right;top:556.58px;font-size:14.5px;color:#3a4a20;font-weight:400;font-family:'Liberation Serif',serif;-webkit-text-stroke:.25px">4819</div>
<div class="t" style="left:613.00px;width:600px;text-align:right;top:556.58px;font-size:14.5px;color:#3a4a20;font-weight:400;font-family:'Liberation Serif',serif;-webkit-text-stroke:.25px">5836</div>
<div class="t" style="left:704.60px;width:600px;text-align:right;top:556.58px;font-size:14.5px;color:#3a4a20;font-weight:400;font-family:'Liberation Serif',serif;-webkit-text-stroke:.25px">0</div>
<div class="t" style="left:800.40px;width:600px;text-align:right;top:556.58px;font-size:14.5px;color:#3a4a20;font-weight:400;font-family:'Liberation Serif',serif;-webkit-text-stroke:.25px">0</div>
<div class="t" style="left:932.50px;width:600px;text-align:right;top:556.58px;font-size:14.5px;color:#3a4a20;font-weight:400;font-family:'Liberation Serif',serif;-webkit-text-stroke:.25px">0</div>
<div class="t" style="left:377.30px;width:600px;text-align:center;top:580.58px;font-size:14.5px;color:#3a4a20;font-weight:700;font-family:'Liberation Serif',serif;">T</div>
<div class="t" style="left:197.70px;width:600px;text-align:right;top:580.28px;font-size:14.5px;color:#3a4a20;font-weight:400;font-family:'Liberation Serif',serif;-webkit-text-stroke:.25px">26555</div>
<div class="t" style="left:344.60px;width:600px;text-align:right;top:580.28px;font-size:14.5px;color:#3a4a20;font-weight:400;font-family:'Liberation Serif',serif;-webkit-text-stroke:.25px">0</div>
<div class="t" style="left:438.20px;width:600px;text-align:right;top:580.28px;font-size:14.5px;color:#3a4a20;font-weight:400;font-family:'Liberation Serif',serif;-webkit-text-stroke:.25px">18008</div>
<div class="t" style="left:525.50px;width:600px;text-align:right;top:580.28px;font-size:14.5px;color:#3a4a20;font-weight:400;font-family:'Liberation Serif',serif;-webkit-text-stroke:.25px">12462</div>
<div class="t" style="left:613.00px;width:600px;text-align:right;top:580.28px;font-size:14.5px;color:#3a4a20;font-weight:400;font-family:'Liberation Serif',serif;-webkit-text-stroke:.25px">30470</div>
<div class="t" style="left:704.60px;width:600px;text-align:right;top:580.28px;font-size:14.5px;color:#3a4a20;font-weight:400;font-family:'Liberation Serif',serif;-webkit-text-stroke:.25px">0</div>
<div class="t" style="left:800.40px;width:600px;text-align:right;top:580.28px;font-size:14.5px;color:#3a4a20;font-weight:400;font-family:'Liberation Serif',serif;-webkit-text-stroke:.25px">0</div>
<div class="t" style="left:932.50px;width:600px;text-align:right;top:580.28px;font-size:14.5px;color:#3a4a20;font-weight:400;font-family:'Liberation Serif',serif;-webkit-text-stroke:.25px">0</div>
<div class="t" style="left:644.30px;top:601.44px;font-size:14.5px;color:#3a4a20;font-weight:400;font-family:'Liberation Serif',serif;">MEDIUM (4.0 - 9.99)</div>
<div class="t" style="left:321.00px;width:600px;text-align:center;top:647.54px;font-size:14.5px;color:#3a4a20;font-weight:400;font-family:'Liberation Serif',serif;">4</div>
<div class="t" style="left:377.30px;width:600px;text-align:center;top:627.94px;font-size:14.5px;color:#3a4a20;font-weight:700;font-family:'Liberation Serif',serif;">I</div>
<div class="t" style="left:197.70px;width:600px;text-align:right;top:627.64px;font-size:14.5px;color:#3a4a20;font-weight:400;font-family:'Liberation Serif',serif;-webkit-text-stroke:.25px">11986</div>
<div class="t" style="left:344.60px;width:600px;text-align:right;top:627.64px;font-size:14.5px;color:#3a4a20;font-weight:400;font-family:'Liberation Serif',serif;-webkit-text-stroke:.25px">0</div>
<div class="t" style="left:438.20px;width:600px;text-align:right;top:627.64px;font-size:14.5px;color:#3a4a20;font-weight:400;font-family:'Liberation Serif',serif;-webkit-text-stroke:.25px">17576</div>
<div class="t" style="left:525.50px;width:600px;text-align:right;top:627.64px;font-size:14.5px;color:#3a4a20;font-weight:400;font-family:'Liberation Serif',serif;-webkit-text-stroke:.25px">4120</div>
<div class="t" style="left:613.00px;width:600px;text-align:right;top:627.64px;font-size:14.5px;color:#3a4a20;font-weight:400;font-family:'Liberation Serif',serif;-webkit-text-stroke:.25px">21696</div>
<div class="t" style="left:704.60px;width:600px;text-align:right;top:627.64px;font-size:14.5px;color:#3a4a20;font-weight:400;font-family:'Liberation Serif',serif;-webkit-text-stroke:.25px">0</div>
<div class="t" style="left:800.40px;width:600px;text-align:right;top:627.64px;font-size:14.5px;color:#3a4a20;font-weight:400;font-family:'Liberation Serif',serif;-webkit-text-stroke:.25px">0</div>
<div class="t" style="left:932.50px;width:600px;text-align:right;top:627.64px;font-size:14.5px;color:#3a4a20;font-weight:400;font-family:'Liberation Serif',serif;-webkit-text-stroke:.25px">0</div>
<div class="t" style="left:377.30px;width:600px;text-align:center;top:654.44px;font-size:14.5px;color:#3a4a20;font-weight:700;font-family:'Liberation Serif',serif;">UI</div>
<div class="t" style="left:197.70px;width:600px;text-align:right;top:654.14px;font-size:14.5px;color:#3a4a20;font-weight:400;font-family:'Liberation Serif',serif;-webkit-text-stroke:.25px">4615</div>
<div class="t" style="left:344.60px;width:600px;text-align:right;top:654.14px;font-size:14.5px;color:#3a4a20;font-weight:400;font-family:'Liberation Serif',serif;-webkit-text-stroke:.25px">0</div>
<div class="t" style="left:438.20px;width:600px;text-align:right;top:654.14px;font-size:14.5px;color:#3a4a20;font-weight:400;font-family:'Liberation Serif',serif;-webkit-text-stroke:.25px">1446</div>
<div class="t" style="left:525.50px;width:600px;text-align:right;top:654.14px;font-size:14.5px;color:#3a4a20;font-weight:400;font-family:'Liberation Serif',serif;-webkit-text-stroke:.25px">6227</div>
<div class="t" style="left:613.00px;width:600px;text-align:right;top:654.14px;font-size:14.5px;color:#3a4a20;font-weight:400;font-family:'Liberation Serif',serif;-webkit-text-stroke:.25px">7673</div>
<div class="t" style="left:704.60px;width:600px;text-align:right;top:654.14px;font-size:14.5px;color:#3a4a20;font-weight:400;font-family:'Liberation Serif',serif;-webkit-text-stroke:.25px">0</div>
<div class="t" style="left:800.40px;width:600px;text-align:right;top:654.14px;font-size:14.5px;color:#3a4a20;font-weight:400;font-family:'Liberation Serif',serif;-webkit-text-stroke:.25px">0</div>
<div class="t" style="left:932.50px;width:600px;text-align:right;top:654.14px;font-size:14.5px;color:#3a4a20;font-weight:400;font-family:'Liberation Serif',serif;-webkit-text-stroke:.25px">0</div>
<div class="t" style="left:377.30px;width:600px;text-align:center;top:678.14px;font-size:14.5px;color:#3a4a20;font-weight:700;font-family:'Liberation Serif',serif;">T</div>
<div class="t" style="left:197.70px;width:600px;text-align:right;top:677.84px;font-size:14.5px;color:#3a4a20;font-weight:400;font-family:'Liberation Serif',serif;-webkit-text-stroke:.25px">16312</div>
<div class="t" style="left:344.60px;width:600px;text-align:right;top:677.84px;font-size:14.5px;color:#3a4a20;font-weight:400;font-family:'Liberation Serif',serif;-webkit-text-stroke:.25px">0</div>
<div class="t" style="left:438.20px;width:600px;text-align:right;top:677.84px;font-size:14.5px;color:#3a4a20;font-weight:400;font-family:'Liberation Serif',serif;-webkit-text-stroke:.25px">19022</div>
<div class="t" style="left:525.50px;width:600px;text-align:right;top:677.84px;font-size:14.5px;color:#3a4a20;font-weight:400;font-family:'Liberation Serif',serif;-webkit-text-stroke:.25px">10347</div>
<div class="t" style="left:613.00px;width:600px;text-align:right;top:677.84px;font-size:14.5px;color:#3a4a20;font-weight:400;font-family:'Liberation Serif',serif;-webkit-text-stroke:.25px">29369</div>
<div class="t" style="left:704.60px;width:600px;text-align:right;top:677.84px;font-size:14.5px;color:#3a4a20;font-weight:400;font-family:'Liberation Serif',serif;-webkit-text-stroke:.25px">0</div>
<div class="t" style="left:800.40px;width:600px;text-align:right;top:677.84px;font-size:14.5px;color:#3a4a20;font-weight:400;font-family:'Liberation Serif',serif;-webkit-text-stroke:.25px">0</div>
<div class="t" style="left:932.50px;width:600px;text-align:right;top:677.84px;font-size:14.5px;color:#3a4a20;font-weight:400;font-family:'Liberation Serif',serif;-webkit-text-stroke:.25px">0</div>
<div class="t" style="left:644.30px;top:699.00px;font-size:14.5px;color:#3a4a20;font-weight:400;font-family:'Liberation Serif',serif;">LARGE (10 AND ABOVE)</div>
<div class="t" style="left:321.00px;width:600px;text-align:center;top:745.10px;font-size:14.5px;color:#3a4a20;font-weight:400;font-family:'Liberation Serif',serif;">5</div>
<div class="t" style="left:377.30px;width:600px;text-align:center;top:725.50px;font-size:14.5px;color:#3a4a20;font-weight:700;font-family:'Liberation Serif',serif;">I</div>
<div class="t" style="left:197.70px;width:600px;text-align:right;top:725.20px;font-size:14.5px;color:#3a4a20;font-weight:400;font-family:'Liberation Serif',serif;-webkit-text-stroke:.25px">2005</div>
<div class="t" style="left:344.60px;width:600px;text-align:right;top:725.20px;font-size:14.5px;color:#3a4a20;font-weight:400;font-family:'Liberation Serif',serif;-webkit-text-stroke:.25px">0</div>
<div class="t" style="left:438.20px;width:600px;text-align:right;top:725.20px;font-size:14.5px;color:#3a4a20;font-weight:400;font-family:'Liberation Serif',serif;-webkit-text-stroke:.25px">3671</div>
<div class="t" style="left:525.50px;width:600px;text-align:right;top:725.20px;font-size:14.5px;color:#3a4a20;font-weight:400;font-family:'Liberation Serif',serif;-webkit-text-stroke:.25px">639</div>
<div class="t" style="left:613.00px;width:600px;text-align:right;top:725.20px;font-size:14.5px;color:#3a4a20;font-weight:400;font-family:'Liberation Serif',serif;-webkit-text-stroke:.25px">4310</div>
<div class="t" style="left:704.60px;width:600px;text-align:right;top:725.20px;font-size:14.5px;color:#3a4a20;font-weight:400;font-family:'Liberation Serif',serif;-webkit-text-stroke:.25px">0</div>
<div class="t" style="left:800.40px;width:600px;text-align:right;top:725.20px;font-size:14.5px;color:#3a4a20;font-weight:400;font-family:'Liberation Serif',serif;-webkit-text-stroke:.25px">0</div>
<div class="t" style="left:932.50px;width:600px;text-align:right;top:725.20px;font-size:14.5px;color:#3a4a20;font-weight:400;font-family:'Liberation Serif',serif;-webkit-text-stroke:.25px">0</div>
<div class="t" style="left:377.30px;width:600px;text-align:center;top:752.00px;font-size:14.5px;color:#3a4a20;font-weight:700;font-family:'Liberation Serif',serif;">UI</div>
<div class="t" style="left:197.70px;width:600px;text-align:right;top:751.70px;font-size:14.5px;color:#3a4a20;font-weight:400;font-family:'Liberation Serif',serif;-webkit-text-stroke:.25px">521</div>
<div class="t" style="left:344.60px;width:600px;text-align:right;top:751.70px;font-size:14.5px;color:#3a4a20;font-weight:400;font-family:'Liberation Serif',serif;-webkit-text-stroke:.25px">0</div>
<div class="t" style="left:438.20px;width:600px;text-align:right;top:751.70px;font-size:14.5px;color:#3a4a20;font-weight:400;font-family:'Liberation Serif',serif;-webkit-text-stroke:.25px">611</div>
<div class="t" style="left:525.50px;width:600px;text-align:right;top:751.70px;font-size:14.5px;color:#3a4a20;font-weight:400;font-family:'Liberation Serif',serif;-webkit-text-stroke:.25px">831</div>
<div class="t" style="left:613.00px;width:600px;text-align:right;top:751.70px;font-size:14.5px;color:#3a4a20;font-weight:400;font-family:'Liberation Serif',serif;-webkit-text-stroke:.25px">1442</div>
<div class="t" style="left:704.60px;width:600px;text-align:right;top:751.70px;font-size:14.5px;color:#3a4a20;font-weight:400;font-family:'Liberation Serif',serif;-webkit-text-stroke:.25px">0</div>
<div class="t" style="left:800.40px;width:600px;text-align:right;top:751.70px;font-size:14.5px;color:#3a4a20;font-weight:400;font-family:'Liberation Serif',serif;-webkit-text-stroke:.25px">0</div>
<div class="t" style="left:932.50px;width:600px;text-align:right;top:751.70px;font-size:14.5px;color:#3a4a20;font-weight:400;font-family:'Liberation Serif',serif;-webkit-text-stroke:.25px">0</div>
<div class="t" style="left:377.30px;width:600px;text-align:center;top:775.70px;font-size:14.5px;color:#3a4a20;font-weight:700;font-family:'Liberation Serif',serif;">T</div>
<div class="t" style="left:197.70px;width:600px;text-align:right;top:775.40px;font-size:14.5px;color:#3a4a20;font-weight:400;font-family:'Liberation Serif',serif;-webkit-text-stroke:.25px">2485</div>
<div class="t" style="left:344.60px;width:600px;text-align:right;top:775.40px;font-size:14.5px;color:#3a4a20;font-weight:400;font-family:'Liberation Serif',serif;-webkit-text-stroke:.25px">0</div>
<div class="t" style="left:438.20px;width:600px;text-align:right;top:775.40px;font-size:14.5px;color:#3a4a20;font-weight:400;font-family:'Liberation Serif',serif;-webkit-text-stroke:.25px">4282</div>
<div class="t" style="left:525.50px;width:600px;text-align:right;top:775.40px;font-size:14.5px;color:#3a4a20;font-weight:400;font-family:'Liberation Serif',serif;-webkit-text-stroke:.25px">1470</div>
<div class="t" style="left:613.00px;width:600px;text-align:right;top:775.40px;font-size:14.5px;color:#3a4a20;font-weight:400;font-family:'Liberation Serif',serif;-webkit-text-stroke:.25px">5752</div>
<div class="t" style="left:704.60px;width:600px;text-align:right;top:775.40px;font-size:14.5px;color:#3a4a20;font-weight:400;font-family:'Liberation Serif',serif;-webkit-text-stroke:.25px">0</div>
<div class="t" style="left:800.40px;width:600px;text-align:right;top:775.40px;font-size:14.5px;color:#3a4a20;font-weight:400;font-family:'Liberation Serif',serif;-webkit-text-stroke:.25px">0</div>
<div class="t" style="left:932.50px;width:600px;text-align:right;top:775.40px;font-size:14.5px;color:#3a4a20;font-weight:400;font-family:'Liberation Serif',serif;-webkit-text-stroke:.25px">0</div>
<div class="t" style="left:644.30px;top:796.56px;font-size:14.5px;color:#3a4a20;font-weight:400;font-family:'Liberation Serif',serif;">ALL GROUPS</div>
<div class="t" style="left:377.30px;width:600px;text-align:center;top:823.06px;font-size:14.5px;color:#3a4a20;font-weight:700;font-family:'Liberation Serif',serif;">I</div>
<div class="t" style="left:197.70px;width:600px;text-align:right;top:822.76px;font-size:14.5px;color:#3a4a20;font-weight:400;font-family:'Liberation Serif',serif;-webkit-text-stroke:.25px">94185</div>
<div class="t" style="left:344.60px;width:600px;text-align:right;top:822.76px;font-size:14.5px;color:#3a4a20;font-weight:400;font-family:'Liberation Serif',serif;-webkit-text-stroke:.25px">0</div>
<div class="t" style="left:438.20px;width:600px;text-align:right;top:822.76px;font-size:14.5px;color:#3a4a20;font-weight:400;font-family:'Liberation Serif',serif;-webkit-text-stroke:.25px">67065</div>
<div class="t" style="left:525.50px;width:600px;text-align:right;top:822.76px;font-size:14.5px;color:#3a4a20;font-weight:400;font-family:'Liberation Serif',serif;-webkit-text-stroke:.25px">17355</div>
<div class="t" style="left:613.00px;width:600px;text-align:right;top:822.76px;font-size:14.5px;color:#3a4a20;font-weight:400;font-family:'Liberation Serif',serif;-webkit-text-stroke:.25px">84420</div>
<div class="t" style="left:704.60px;width:600px;text-align:right;top:822.76px;font-size:14.5px;color:#3a4a20;font-weight:400;font-family:'Liberation Serif',serif;-webkit-text-stroke:.25px">0</div>
<div class="t" style="left:800.40px;width:600px;text-align:right;top:822.76px;font-size:14.5px;color:#3a4a20;font-weight:400;font-family:'Liberation Serif',serif;-webkit-text-stroke:.25px">0</div>
<div class="t" style="left:932.50px;width:600px;text-align:right;top:822.76px;font-size:14.5px;color:#3a4a20;font-weight:400;font-family:'Liberation Serif',serif;-webkit-text-stroke:.25px">0</div>
<div class="t" style="left:377.30px;width:600px;text-align:center;top:849.56px;font-size:14.5px;color:#3a4a20;font-weight:700;font-family:'Liberation Serif',serif;">UI</div>
<div class="t" style="left:197.70px;width:600px;text-align:right;top:849.26px;font-size:14.5px;color:#3a4a20;font-weight:400;font-family:'Liberation Serif',serif;-webkit-text-stroke:.25px">25275</div>
<div class="t" style="left:344.60px;width:600px;text-align:right;top:849.26px;font-size:14.5px;color:#3a4a20;font-weight:400;font-family:'Liberation Serif',serif;-webkit-text-stroke:.25px">0</div>
<div class="t" style="left:438.20px;width:600px;text-align:right;top:849.26px;font-size:14.5px;color:#3a4a20;font-weight:400;font-family:'Liberation Serif',serif;-webkit-text-stroke:.25px">9756</div>
<div class="t" style="left:525.50px;width:600px;text-align:right;top:849.26px;font-size:14.5px;color:#3a4a20;font-weight:400;font-family:'Liberation Serif',serif;-webkit-text-stroke:.25px">15322</div>
<div class="t" style="left:613.00px;width:600px;text-align:right;top:849.26px;font-size:14.5px;color:#3a4a20;font-weight:400;font-family:'Liberation Serif',serif;-webkit-text-stroke:.25px">25078</div>
<div class="t" style="left:704.60px;width:600px;text-align:right;top:849.26px;font-size:14.5px;color:#3a4a20;font-weight:400;font-family:'Liberation Serif',serif;-webkit-text-stroke:.25px">0</div>
<div class="t" style="left:800.40px;width:600px;text-align:right;top:849.26px;font-size:14.5px;color:#3a4a20;font-weight:400;font-family:'Liberation Serif',serif;-webkit-text-stroke:.25px">0</div>
<div class="t" style="left:932.50px;width:600px;text-align:right;top:849.26px;font-size:14.5px;color:#3a4a20;font-weight:400;font-family:'Liberation Serif',serif;-webkit-text-stroke:.25px">0</div>
<div class="t" style="left:377.30px;width:600px;text-align:center;top:873.26px;font-size:14.5px;color:#3a4a20;font-weight:700;font-family:'Liberation Serif',serif;">T</div>
<div class="t" style="left:197.70px;width:600px;text-align:right;top:872.96px;font-size:14.5px;color:#3a4a20;font-weight:400;font-family:'Liberation Serif',serif;-webkit-text-stroke:.25px">119033</div>
<div class="t" style="left:344.60px;width:600px;text-align:right;top:872.96px;font-size:14.5px;color:#3a4a20;font-weight:400;font-family:'Liberation Serif',serif;-webkit-text-stroke:.25px">0</div>
<div class="t" style="left:438.20px;width:600px;text-align:right;top:872.96px;font-size:14.5px;color:#3a4a20;font-weight:400;font-family:'Liberation Serif',serif;-webkit-text-stroke:.25px">76821</div>
<div class="t" style="left:525.50px;width:600px;text-align:right;top:872.96px;font-size:14.5px;color:#3a4a20;font-weight:400;font-family:'Liberation Serif',serif;-webkit-text-stroke:.25px">32677</div>
<div class="t" style="left:613.00px;width:600px;text-align:right;top:872.96px;font-size:14.5px;color:#3a4a20;font-weight:400;font-family:'Liberation Serif',serif;-webkit-text-stroke:.25px">109498</div>
<div class="t" style="left:704.60px;width:600px;text-align:right;top:872.96px;font-size:14.5px;color:#3a4a20;font-weight:400;font-family:'Liberation Serif',serif;-webkit-text-stroke:.25px">0</div>
<div class="t" style="left:800.40px;width:600px;text-align:right;top:872.96px;font-size:14.5px;color:#3a4a20;font-weight:400;font-family:'Liberation Serif',serif;-webkit-text-stroke:.25px">0</div>
<div class="t" style="left:932.50px;width:600px;text-align:right;top:872.96px;font-size:14.5px;color:#3a4a20;font-weight:400;font-family:'Liberation Serif',serif;-webkit-text-stroke:.25px">0</div>
<div class="t" style="left:607.00px;top:903.34px;font-size:14.4px;color:#2e8b3e;font-weight:700;font-family:'Liberation Serif',serif;">NOTE: I-IRRIGATED</div>
<div class="t" style="left:643.60px;top:922.54px;font-size:14.4px;color:#2e8b3e;font-weight:700;font-family:'Liberation Serif',serif;">UI-UNIRRIGATED</div>
<div class="t" style="left:643.60px;top:941.74px;font-size:14.4px;color:#2e8b3e;font-weight:700;font-family:'Liberation Serif',serif;">T-TOTAL (SUM OF IRRIGATED AND UNIRRIGATED AREAS)</div>
</div>
<svg class="abs" style="left:0;top:0" width="174" height="225"><g stroke="rgba(235,0,0,.9)" stroke-width="1.7" stroke-dasharray="3 2" fill="none"><path d="M3.8 20.9H168.6"/><path d="M4.8 19.9V141.4"/><path d="M167.6 141.4V19.9"/><path d="M168.6 140.4H3.8"/></g></svg>
</div>
<div class="t" style="left:-184.00px;width:600px;text-align:center;top:325.19px;font-size:17.5px;color:#555;font-weight:400;font-family:'Liberation Sans',sans-serif;">1</div>
<div class="r" style="left:244.00px;top:62.00px;width:1649.00px;height:76.00px;background:#d9edf7;box-shadow:inset 0 3px 3px -1px rgba(0,0,0,.05)"></div>
<div class="t" style="left:261.60px;top:91.79px;font-size:17.5px;color:#333;font-weight:400;font-family:'Liberation Sans',sans-serif;">background_lines_2.pdf</div>
<div class="r" style="left:477px;top:78px;width:130px;height:44px;border-radius:5px;border:1px solid #28a4c9;background:linear-gradient(#5bc0de,#2aabd2);box-shadow:inset 0 1px 0 rgba(255,255,255,.15),0 1px 1px rgba(0,0,0,.075)"></div>
<svg class="abs" style="left:488px;top:84px" width="28" height="28"><rect x="5.2" y="17.6" width="16.9" height="4.8" fill="#fff"/><rect x="19.1" y="19.2" width="1" height="1.7" fill="#8aa"/><polygon points="19.1,6 19.1,16.1 9,16.1 10.7,12.2 10.1,10.3 12.8,7.8 15.2,9.9" fill="#fff"/><polygon points="6.9,7.9 10.6,4.7 12,6.2 8.3,9.4" fill="#fff"/></svg>
<div class="t" style="left:511.60px;top:91.59px;font-size:17.5px;color:#fff;font-weight:400;font-family:'Liberation Sans',sans-serif;text-shadow:0 -1px 0 rgba(0,0,0,.2)">Templates</div>
<div class="r" style="left:633px;top:78px;width:207px;height:43.5px;border-radius:5px;border:1px solid #ccc;border-color:#dbdbdb #d0d0d0 #c4c4c4;background:linear-gradient(#fff,#e0e0e0);box-shadow:inset 0 1px 0 rgba(255,255,255,.15),0 1px 1px rgba(0,0,0,.075)"></div>
<svg class="abs" style="left:648px;top:86px" width="22" height="22"><circle cx="10.9" cy="11.4" r="7.7" fill="none" stroke="#262626" stroke-width="2.9"/><path d="M8.4 8.9L13.4 13.9M13.4 8.9L8.4 13.9" stroke="#262626" stroke-width="2.2"/></svg>
<div class="t" style="left:672.80px;top:91.89px;font-size:17.5px;color:#333;font-weight:400;font-family:'Liberation Sans',sans-serif;">Clear All Selections</div>
<div class="r" style="left:867px;top:78.5px;width:194px;height:43px;border-radius:5px;border:1px solid #d3dbe0;background:#dde5e9"></div>
<svg class="abs" style="left:884px;top:86px" width="16" height="22"><path d="M10.75 2L2.4 11.9L7 11.9L5.2 20.1L13.7 9.3L8.5 9.3Z" fill="#6f787b"/></svg>
<div class="t" style="left:905.80px;top:91.09px;font-size:17.5px;color:#7b8386;font-weight:400;font-family:'Liberation Sans',sans-serif;">Autodetect Tables</div>
<div class="r" style="left:1544px;top:78.5px;width:309px;height:43px;border-radius:5px;border:1px solid #3e8f3e;background:linear-gradient(#5cb85c,#419641);box-shadow:inset 0 1px 0 rgba(255,255,255,.15),0 1px 1px rgba(0,0,0,.075)"></div>
<svg class="abs" style="left:1559px;top:86px" width="22" height="22"><rect x="3.2" y="3.6" width="15.1" height="16" fill="rgba(255,255,255,.28)" stroke="#fff" stroke-width="2"/><rect x="5.2" y="7.0" width="1.2" height="1.2" fill="#fff"/><rect x="7.4" y="7.0" width="9.4" height="1.2" fill="#fff"/><rect x="5.2" y="10.0" width="1.2" height="1.2" fill="#fff"/><rect x="7.4" y="10.0" width="9.4" height="1.2" fill="#fff"/><rect x="5.2" y="13.0" width="1.2" height="1.2" fill="#fff"/><rect x="7.4" y="13.0" width="9.4" height="1.2" fill="#fff"/><rect x="5.2" y="16.0" width="1.2" height="1.2" fill="#fff"/><rect x="7.4" y="16.0" width="9.4" height="1.2" fill="#fff"/></svg>
<div class="t" style="left:1582.60px;top:91.79px;font-size:17.5px;color:#fff;font-weight:400;font-family:'Liberation Sans',sans-serif;text-shadow:0 -1px 0 rgba(0,0,0,.2)">Preview &amp; Export Extracted Data</div>
<div class="r" style="left:1893.00px;top:62.00px;width:6.00px;height:76.00px;background:#767676;"></div>
<div class="r" style="left:0;top:0;width:1899px;height:62px;background:linear-gradient(#fff,#f8f8f8)"></div>
<svg class="abs" style="left:40px;top:5px" width="50" height="50">
<path d="M6.9 17.8L17.3 17.8L17.3 8.3L25.9 8.3L25.9 22.4L34.1 22.4L34.1 43.7L6.9 43.7Z" fill="#0fa488"/>
<path d="M9.3 16.4L16 10.1L16 16.4Z" fill="#0fa488"/>
<rect x="27.6" y="12.4" width="10.3" height="8.9" rx="1.4" fill="#0fa488"/>
<path d="M28.4 13L28.4 11.4A4.3 4.3 0 0 1 36.8 9.6" fill="none" stroke="#0fa488" stroke-width="1.8" stroke-linecap="round"/>
<ellipse cx="32.6" cy="10.4" rx="1.2" ry=".5" fill="#0fa488"/>
<circle cx="32.8" cy="15.3" r="1.1" fill="#fff"/><path d="M32.2 15.6L31.7 18.8L33.9 18.8L33.4 15.6Z" fill="#fff"/>
<g fill="none" stroke="#fff" stroke-width="1.3">
<ellipse cx="19.5" cy="23.5" rx="1.2" ry="2.1"/>
<path d="M19.6 25.6L20.1 28.4L13.8 37.6"/>
<path d="M20.1 28.4L24.5 33.4L27.5 33.6"/>
<path d="M16.8 34.6Q20 33 24.5 33.4"/>
<ellipse cx="13.3" cy="38.4" rx="1.8" ry="1.2" transform="rotate(-40 13.3 38.4)"/>
<ellipse cx="27.3" cy="33.6" rx="1.7" ry="1.1" transform="rotate(15 27.3 33.6)"/>
</g>
</svg>
<div class="t" style="left:85.90px;top:17.51px;font-size:24.2px;color:#000;font-weight:700;font-family:'Liberation Sans',sans-serif;transform:scaleX(.905);transform-origin:0 0">Tabula</div>
<div class="t" style="left:193.60px;top:21.79px;font-size:17.5px;color:#777;font-weight:400;font-family:'Liberation Sans',sans-serif;">My Files</div>
<div class="t" style="left:296.60px;top:21.79px;font-size:17.5px;color:#777;font-weight:400;font-family:'Liberation Sans',sans-serif;">My Templates</div>
<div class="t" style="left:441.60px;top:21.79px;font-size:17.5px;color:#777;font-weight:400;font-family:'Liberation Sans',sans-serif;">About</div>
<div class="t" style="left:525.60px;top:21.79px;font-size:17.5px;color:#777;font-weight:400;font-family:'Liberation Sans',sans-serif;">Help</div>
<div class="t" style="left:598.60px;top:21.79px;font-size:17.5px;color:#777;font-weight:400;font-family:'Liberation Sans',sans-serif;">Source Code</div>
<div class="t" style="left:1562.90px;top:21.79px;font-size:17.5px;color:#777;font-weight:400;font-family:'Liberation Sans',sans-serif;">Support Tabula on OpenCollective!</div>
<div class="r" style="left:1899.00px;top:0.00px;width:21.00px;height:939.00px;background:#f1f1f1;"></div>
<div class="r" style="left:1901.00px;top:70.00px;width:17.00px;height:553.00px;background:#c1c1c1;"></div>
<svg class="abs" style="left:1904px;top:6px" width="12" height="8"><path d="M1 7L5.6 1.2L10.2 7Z" fill="#505050"/></svg>
<svg class="abs" style="left:1904px;top:925px" width="12" height="8"><path d="M1 .8L5.6 6.8L10.2 .8Z" fill="#505050"/></svg>
</body></html>
